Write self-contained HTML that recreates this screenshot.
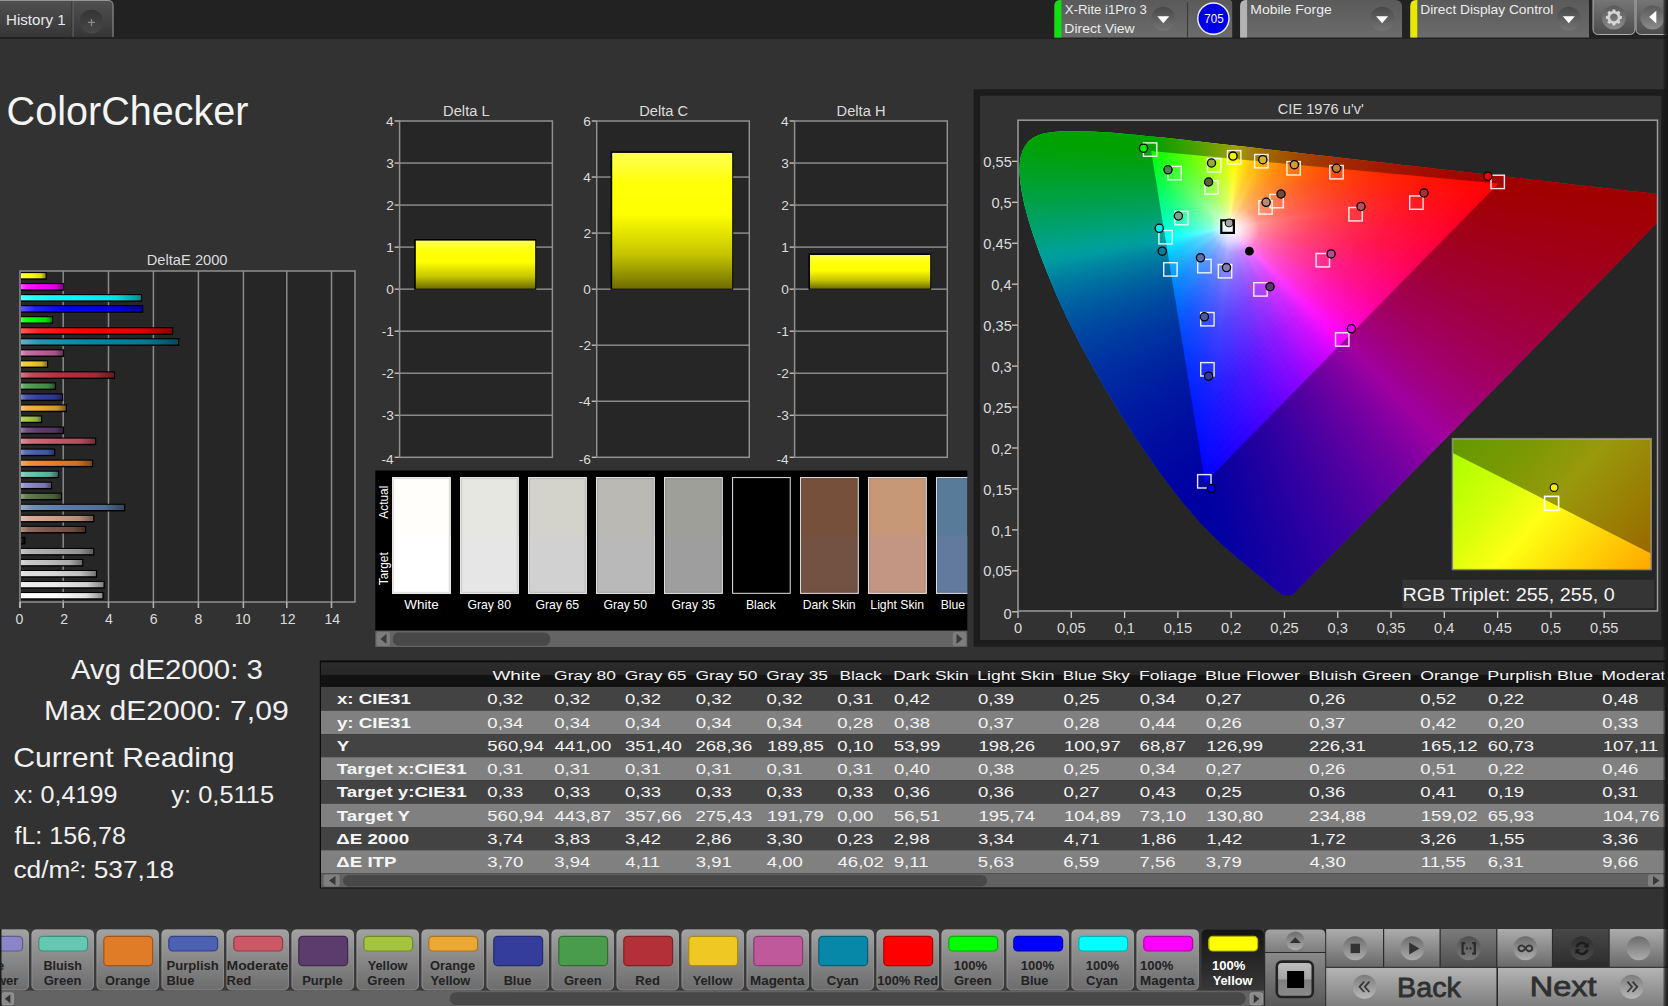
<!DOCTYPE html>
<html><head><meta charset="utf-8"><title>ColorChecker</title>
<style>
html,body{margin:0;padding:0;background:#323232;width:1668px;height:1006px;overflow:hidden}
svg{position:absolute;left:0;top:0}
text{font-family:"Liberation Sans",sans-serif;white-space:pre}
</style></head><body>
<svg width="1668" height="1006" viewBox="0 0 1668 1006">
<defs>
<linearGradient id="gTab" x1="0" y1="0" x2="0" y2="1"><stop offset="0" stop-color="#505050"/><stop offset="1" stop-color="#363636"/></linearGradient>
<linearGradient id="gPanel" x1="0" y1="0" x2="0" y2="1"><stop offset="0" stop-color="#5a5a5a"/><stop offset="1" stop-color="#6c6c6c"/></linearGradient>
<linearGradient id="gCirc" x1="0" y1="0" x2="0" y2="1"><stop offset="0" stop-color="#484848"/><stop offset="1" stop-color="#747474"/></linearGradient>
<linearGradient id="gBtn" x1="0" y1="0" x2="0" y2="1"><stop offset="0" stop-color="#787878"/><stop offset="1" stop-color="#4c4c4c"/></linearGradient>
<linearGradient id="gBtnC" x1="0" y1="0" x2="0" y2="1"><stop offset="0" stop-color="#585858"/><stop offset="1" stop-color="#8c8c8c"/></linearGradient>
<linearGradient id="gPlus" x1="0" y1="0" x2="0" y2="1"><stop offset="0" stop-color="#343434"/><stop offset="1" stop-color="#484848"/></linearGradient>
<linearGradient id="gEdge" x1="0" y1="0" x2="1" y2="0"><stop offset="0" stop-color="#323232"/><stop offset="1" stop-color="#101010"/></linearGradient>
<linearGradient id="gb0" x1="0" y1="0" x2="1" y2="0"><stop offset="0" stop-color="#ffff59"/><stop offset="0.12" stop-color="#ffff1f"/><stop offset="0.4" stop-color="#ffff00"/><stop offset="0.8" stop-color="#e0e000"/><stop offset="1" stop-color="#8c8c00"/></linearGradient>
<linearGradient id="gb1" x1="0" y1="0" x2="1" y2="0"><stop offset="0" stop-color="#ff59ff"/><stop offset="0.12" stop-color="#ff1fff"/><stop offset="0.4" stop-color="#ff00ff"/><stop offset="0.8" stop-color="#e000e0"/><stop offset="1" stop-color="#8c008c"/></linearGradient>
<linearGradient id="gb2" x1="0" y1="0" x2="1" y2="0"><stop offset="0" stop-color="#59ffff"/><stop offset="0.12" stop-color="#1fffff"/><stop offset="0.4" stop-color="#00ffff"/><stop offset="0.8" stop-color="#00e0e0"/><stop offset="1" stop-color="#008c8c"/></linearGradient>
<linearGradient id="gb3" x1="0" y1="0" x2="1" y2="0"><stop offset="0" stop-color="#5959ff"/><stop offset="0.12" stop-color="#1f1fff"/><stop offset="0.4" stop-color="#0000ff"/><stop offset="0.8" stop-color="#0000e0"/><stop offset="1" stop-color="#00008c"/></linearGradient>
<linearGradient id="gb4" x1="0" y1="0" x2="1" y2="0"><stop offset="0" stop-color="#59ff59"/><stop offset="0.12" stop-color="#1fff1f"/><stop offset="0.4" stop-color="#00ff00"/><stop offset="0.8" stop-color="#00e000"/><stop offset="1" stop-color="#008c00"/></linearGradient>
<linearGradient id="gb5" x1="0" y1="0" x2="1" y2="0"><stop offset="0" stop-color="#ff5959"/><stop offset="0.12" stop-color="#ff1f1f"/><stop offset="0.4" stop-color="#ff0000"/><stop offset="0.8" stop-color="#e00000"/><stop offset="1" stop-color="#8c0000"/></linearGradient>
<linearGradient id="gb6" x1="0" y1="0" x2="1" y2="0"><stop offset="0" stop-color="#60b1c6"/><stop offset="0.12" stop-color="#2795b2"/><stop offset="0.4" stop-color="#0a87a8"/><stop offset="0.8" stop-color="#097794"/><stop offset="1" stop-color="#064a5c"/></linearGradient>
<linearGradient id="gb7" x1="0" y1="0" x2="1" y2="0"><stop offset="0" stop-color="#d698bf"/><stop offset="0.12" stop-color="#c873a8"/><stop offset="0.4" stop-color="#c0609c"/><stop offset="0.8" stop-color="#a95489"/><stop offset="1" stop-color="#6a3556"/></linearGradient>
<linearGradient id="gb8" x1="0" y1="0" x2="1" y2="0"><stop offset="0" stop-color="#f4db76"/><stop offset="0.12" stop-color="#f0cf45"/><stop offset="0.4" stop-color="#eec82c"/><stop offset="0.8" stop-color="#d1b027"/><stop offset="1" stop-color="#836e18"/></linearGradient>
<linearGradient id="gb9" x1="0" y1="0" x2="1" y2="0"><stop offset="0" stop-color="#d17883"/><stop offset="0.12" stop-color="#c14957"/><stop offset="0.4" stop-color="#b83040"/><stop offset="0.8" stop-color="#a22a38"/><stop offset="1" stop-color="#651a23"/></linearGradient>
<linearGradient id="gb10" x1="0" y1="0" x2="1" y2="0"><stop offset="0" stop-color="#89bd8b"/><stop offset="0.12" stop-color="#60a661"/><stop offset="0.4" stop-color="#4a9a4c"/><stop offset="0.8" stop-color="#418843"/><stop offset="1" stop-color="#29552a"/></linearGradient>
<linearGradient id="gb11" x1="0" y1="0" x2="1" y2="0"><stop offset="0" stop-color="#7b83c4"/><stop offset="0.12" stop-color="#4c57af"/><stop offset="0.4" stop-color="#3440a4"/><stop offset="0.8" stop-color="#2e3890"/><stop offset="1" stop-color="#1d235a"/></linearGradient>
<linearGradient id="gb12" x1="0" y1="0" x2="1" y2="0"><stop offset="0" stop-color="#f5c678"/><stop offset="0.12" stop-color="#f2b249"/><stop offset="0.4" stop-color="#f0a830"/><stop offset="0.8" stop-color="#d3942a"/><stop offset="1" stop-color="#845c1a"/></linearGradient>
<linearGradient id="gb13" x1="0" y1="0" x2="1" y2="0"><stop offset="0" stop-color="#c4d985"/><stop offset="0.12" stop-color="#afcb5a"/><stop offset="0.4" stop-color="#a4c444"/><stop offset="0.8" stop-color="#90ac3c"/><stop offset="1" stop-color="#5a6c25"/></linearGradient>
<linearGradient id="gb14" x1="0" y1="0" x2="1" y2="0"><stop offset="0" stop-color="#9880a2"/><stop offset="0.12" stop-color="#735381"/><stop offset="0.4" stop-color="#603c70"/><stop offset="0.8" stop-color="#543563"/><stop offset="1" stop-color="#35213e"/></linearGradient>
<linearGradient id="gb15" x1="0" y1="0" x2="1" y2="0"><stop offset="0" stop-color="#de929e"/><stop offset="0.12" stop-color="#d26c7c"/><stop offset="0.4" stop-color="#cc586a"/><stop offset="0.8" stop-color="#b44d5d"/><stop offset="1" stop-color="#70303a"/></linearGradient>
<linearGradient id="gb16" x1="0" y1="0" x2="1" y2="0"><stop offset="0" stop-color="#8898cc"/><stop offset="0.12" stop-color="#5e73b9"/><stop offset="0.4" stop-color="#4860b0"/><stop offset="0.8" stop-color="#3f549b"/><stop offset="1" stop-color="#283561"/></linearGradient>
<linearGradient id="gb17" x1="0" y1="0" x2="1" y2="0"><stop offset="0" stop-color="#f0ac76"/><stop offset="0.12" stop-color="#eb8f45"/><stop offset="0.4" stop-color="#e8802c"/><stop offset="0.8" stop-color="#cc7127"/><stop offset="1" stop-color="#804618"/></linearGradient>
<linearGradient id="gb18" x1="0" y1="0" x2="1" y2="0"><stop offset="0" stop-color="#99d6c8"/><stop offset="0.12" stop-color="#75c8b4"/><stop offset="0.4" stop-color="#62c0aa"/><stop offset="0.8" stop-color="#56a996"/><stop offset="1" stop-color="#366a5e"/></linearGradient>
<linearGradient id="gb19" x1="0" y1="0" x2="1" y2="0"><stop offset="0" stop-color="#b3afd9"/><stop offset="0.12" stop-color="#9893cb"/><stop offset="0.4" stop-color="#8a84c4"/><stop offset="0.8" stop-color="#7974ac"/><stop offset="1" stop-color="#4c496c"/></linearGradient>
<linearGradient id="gb20" x1="0" y1="0" x2="1" y2="0"><stop offset="0" stop-color="#92a283"/><stop offset="0.12" stop-color="#6c8157"/><stop offset="0.4" stop-color="#587040"/><stop offset="0.8" stop-color="#4d6338"/><stop offset="1" stop-color="#303e23"/></linearGradient>
<linearGradient id="gb21" x1="0" y1="0" x2="1" y2="0"><stop offset="0" stop-color="#95aac6"/><stop offset="0.12" stop-color="#708cb2"/><stop offset="0.4" stop-color="#5c7ca8"/><stop offset="0.8" stop-color="#516d94"/><stop offset="1" stop-color="#33445c"/></linearGradient>
<linearGradient id="gb22" x1="0" y1="0" x2="1" y2="0"><stop offset="0" stop-color="#e0c1b2"/><stop offset="0.12" stop-color="#d6ab96"/><stop offset="0.4" stop-color="#d0a088"/><stop offset="0.8" stop-color="#b78d78"/><stop offset="1" stop-color="#72584b"/></linearGradient>
<linearGradient id="gb23" x1="0" y1="0" x2="1" y2="0"><stop offset="0" stop-color="#ac9288"/><stop offset="0.12" stop-color="#8f6c5e"/><stop offset="0.4" stop-color="#805848"/><stop offset="0.8" stop-color="#714d3f"/><stop offset="1" stop-color="#463028"/></linearGradient>
<linearGradient id="gb24" x1="0" y1="0" x2="1" y2="0"><stop offset="0" stop-color="#646464"/><stop offset="0.12" stop-color="#2d2d2d"/><stop offset="0.4" stop-color="#101010"/><stop offset="0.8" stop-color="#0e0e0e"/><stop offset="1" stop-color="#090909"/></linearGradient>
<linearGradient id="gb25" x1="0" y1="0" x2="1" y2="0"><stop offset="0" stop-color="#c6c6c6"/><stop offset="0.12" stop-color="#b2b2b2"/><stop offset="0.4" stop-color="#a8a8a8"/><stop offset="0.8" stop-color="#949494"/><stop offset="1" stop-color="#5c5c5c"/></linearGradient>
<linearGradient id="gb26" x1="0" y1="0" x2="1" y2="0"><stop offset="0" stop-color="#d6d6d6"/><stop offset="0.12" stop-color="#c8c8c8"/><stop offset="0.4" stop-color="#c0c0c0"/><stop offset="0.8" stop-color="#a9a9a9"/><stop offset="1" stop-color="#6a6a6a"/></linearGradient>
<linearGradient id="gb27" x1="0" y1="0" x2="1" y2="0"><stop offset="0" stop-color="#e6e6e6"/><stop offset="0.12" stop-color="#dddddd"/><stop offset="0.4" stop-color="#d8d8d8"/><stop offset="0.8" stop-color="#bebebe"/><stop offset="1" stop-color="#777777"/></linearGradient>
<linearGradient id="gb28" x1="0" y1="0" x2="1" y2="0"><stop offset="0" stop-color="#f3f3f3"/><stop offset="0.12" stop-color="#eeeeee"/><stop offset="0.4" stop-color="#ececec"/><stop offset="0.8" stop-color="#d0d0d0"/><stop offset="1" stop-color="#828282"/></linearGradient>
<linearGradient id="gb29" x1="0" y1="0" x2="1" y2="0"><stop offset="0" stop-color="#ffffff"/><stop offset="0.12" stop-color="#ffffff"/><stop offset="0.4" stop-color="#ffffff"/><stop offset="0.8" stop-color="#e0e0e0"/><stop offset="1" stop-color="#8c8c8c"/></linearGradient>
<linearGradient id="gYel" x1="0" y1="0" x2="0" y2="1"><stop offset="0" stop-color="#ffff58"/><stop offset="0.22" stop-color="#ffff08"/><stop offset="0.45" stop-color="#ffff00"/><stop offset="0.75" stop-color="#c4c400"/><stop offset="1" stop-color="#6e6c00"/></linearGradient>
<linearGradient id="gHdr" x1="0" y1="0" x2="0" y2="1"><stop offset="0" stop-color="#2c2c2c"/><stop offset="0.5" stop-color="#262626"/><stop offset="0.52" stop-color="#141414"/><stop offset="1" stop-color="#101010"/></linearGradient>
<linearGradient id="gB" x1="0" y1="0" x2="0" y2="1"><stop offset="0" stop-color="#a2a2a2"/><stop offset="1" stop-color="#6c6c6c"/></linearGradient>
<linearGradient id="gBsel" x1="0" y1="0" x2="0" y2="1"><stop offset="0" stop-color="#151515"/><stop offset="1" stop-color="#383838"/></linearGradient>
<linearGradient id="gC1" x1="0" y1="0" x2="0" y2="1"><stop offset="0" stop-color="#acacac"/><stop offset="1" stop-color="#6a6a6a"/></linearGradient>
<linearGradient id="gC1c" x1="0" y1="0" x2="0" y2="1"><stop offset="0" stop-color="#6c6c6c"/><stop offset="1" stop-color="#acacac"/></linearGradient>
<linearGradient id="gC2" x1="0" y1="0" x2="0" y2="1"><stop offset="0" stop-color="#7c7c7c"/><stop offset="1" stop-color="#505050"/></linearGradient>
<linearGradient id="gC2c" x1="0" y1="0" x2="0" y2="1"><stop offset="0" stop-color="#4e4e4e"/><stop offset="1" stop-color="#7c7c7c"/></linearGradient>
<linearGradient id="gC3" x1="0" y1="0" x2="0" y2="1"><stop offset="0" stop-color="#484848"/><stop offset="1" stop-color="#2c2c2c"/></linearGradient>
<linearGradient id="gC3c" x1="0" y1="0" x2="0" y2="1"><stop offset="0" stop-color="#2e2e2e"/><stop offset="1" stop-color="#4a4a4a"/></linearGradient>
<linearGradient id="gBk" x1="0" y1="0" x2="0" y2="1"><stop offset="0" stop-color="#b4b4b4"/><stop offset="1" stop-color="#7e7e7e"/></linearGradient>
<linearGradient id="gBkc" x1="0" y1="0" x2="0" y2="1"><stop offset="0" stop-color="#7c7c7c"/><stop offset="1" stop-color="#b8b8b8"/></linearGradient>
<linearGradient id="gS1" x1="0" y1="0" x2="0" y2="1"><stop offset="0" stop-color="#a4a4a4"/><stop offset="1" stop-color="#7c7c7c"/></linearGradient>
<linearGradient id="gS2" x1="0" y1="0" x2="0" y2="1"><stop offset="0" stop-color="#8a8a8a"/><stop offset="1" stop-color="#585858"/></linearGradient>
<linearGradient id="gSq" x1="0" y1="0" x2="0" y2="1"><stop offset="0" stop-color="#c0c0c0"/><stop offset="0.5" stop-color="#a4a4a4"/><stop offset="0.51" stop-color="#7e7e7e"/><stop offset="1" stop-color="#8a8a8a"/></linearGradient>
</defs>
<rect x="0.00" y="0.00" width="1668.00" height="39.00" fill="#222222"/>
<path d="M0 0 H108 Q113.5 0 113.5 5.5 V37 H0Z" fill="url(#gTab)"/>
<path d="M0 0.5 H108 Q113 0.5 113 5.5 V37" fill="none" stroke="#949494" stroke-width="1"/>
<path d="M72.9 1 V37" stroke="#767676" stroke-width="1"/>
<path d="M71.9 1 V37" stroke="#343434" stroke-width="1"/>
<circle cx="91.5" cy="21.6" r="11.8" fill="url(#gPlus)"/>
<path d="M88 22.4 H95 M91.5 18.9 V25.9" stroke="#8c8c8c" stroke-width="1.2"/>
<text x="5.99" y="25.10" font-size="14.53" textLength="59.59" lengthAdjust="spacingAndGlyphs" fill="#e8e8e8">History 1</text>
<path d="M1054.4 37.5 V6 Q1054.4 0 1060.4 0 H1229.2 Q1232.2 0 1232.2 3 V37.5Z" fill="url(#gPanel)"/>
<path d="M1054.4 37.5 V6 Q1054.4 0 1060.4 0 H1061.4 V37.5Z" fill="#10e010"/>
<path d="M1187.5 2 V37.5" stroke="#3c3c3c" stroke-width="1.2"/>
<circle cx="1163.3" cy="18.7" r="12" fill="url(#gCirc)"/>
<path d="M1157.3 16.2 h12 l-6 7z" fill="#fff"/>
<circle cx="1213.4" cy="18.6" r="15.6" fill="#0000e6" stroke="#f0f0ff" stroke-width="1.4"/>
<text x="1204.32" y="22.90" font-size="11.92" textLength="19.28" lengthAdjust="spacingAndGlyphs" fill="#fff">705</text>
<text x="1064.84" y="13.90" font-size="12.94" textLength="81.99" lengthAdjust="spacingAndGlyphs" fill="#ececec">X-Rite i1Pro 3</text>
<text x="1064.39" y="32.90" font-size="12.94" textLength="70.20" lengthAdjust="spacingAndGlyphs" fill="#ececec">Direct View</text>
<path d="M1240.1 37.5 V6 Q1240.1 0 1246.1 0 H1395 Q1402 0 1402 7 V37.5Z" fill="url(#gPanel)"/>
<path d="M1240.1 37.5 V6 Q1240.1 0 1246.1 0 H1247.1 V37.5Z" fill="#b4b4b4"/>
<circle cx="1382.1" cy="18.7" r="12" fill="url(#gCirc)"/>
<path d="M1376.1 16.2 h12 l-6 7z" fill="#fff"/>
<text x="1250.28" y="13.90" font-size="12.94" textLength="81.39" lengthAdjust="spacingAndGlyphs" fill="#ececec">Mobile Forge</text>
<path d="M1410.3 37.5 V6 Q1410.3 0 1416.3 0 H1588 Q1589 0 1589 1 V37.5Z" fill="url(#gPanel)"/>
<path d="M1410.3 37.5 V6 Q1410.3 0 1416.3 0 H1417.3 V37.5Z" fill="#e8e800"/>
<circle cx="1568.8" cy="18.7" r="12" fill="url(#gCirc)"/>
<path d="M1562.8 16.2 h12 l-6 7z" fill="#fff"/>
<text x="1420.30" y="13.90" font-size="12.94" textLength="132.99" lengthAdjust="spacingAndGlyphs" fill="#ececec">Direct Display Control</text>
<path d="M1593 -2 V29 Q1593 34.5 1598.5 34.5 H1629.5 Q1635 34.5 1635 29 V-2Z" fill="url(#gBtn)" stroke="#b0b0b0" stroke-width="1"/>
<circle cx="1613.9" cy="17.4" r="12" fill="url(#gBtnC)"/>
<path d="M1621.90,16.11 L1621.90,18.69 L1620.16,19.13 L1619.56,20.60 L1620.47,22.14 L1618.64,23.97 L1617.10,23.06 L1615.64,23.66 L1615.19,25.40 L1612.61,25.40 L1612.17,23.66 L1610.70,23.06 L1609.16,23.97 L1607.33,22.14 L1608.24,20.60 L1607.64,19.14 L1605.90,18.69 L1605.90,16.11 L1607.64,15.67 L1608.24,14.20 L1607.33,12.66 L1609.16,10.83 L1610.70,11.74 L1612.16,11.14 L1612.61,9.40 L1615.19,9.40 L1615.63,11.14 L1617.10,11.74 L1618.64,10.83 L1620.47,12.66 L1619.56,14.20 L1620.16,15.66 Z M1613.90 13.50 a3.9 3.9 0 1 0 0.01 0Z" fill="#d4d4d4" fill-rule="evenodd"/>
<path d="M1636 -2 V29 Q1636 34.5 1641.5 34.5 H1672 V-2Z" fill="url(#gBtn)" stroke="#b0b0b0" stroke-width="1"/>
<circle cx="1652.5" cy="17.4" r="12" fill="url(#gBtnC)"/>
<path d="M1656.3 10.7 V23.5 L1649.2 17.1Z" fill="#fff"/>
<text x="6.62" y="125.20" font-size="41.57" textLength="241.81" lengthAdjust="spacingAndGlyphs" fill="#f4f4f4">ColorChecker</text>
<text x="71.00" y="678.80" font-size="27.03" textLength="191.75" lengthAdjust="spacingAndGlyphs" fill="#f0f0f0">Avg dE2000: 3</text>
<text x="44.09" y="719.60" font-size="27.03" textLength="244.62" lengthAdjust="spacingAndGlyphs" fill="#f0f0f0">Max dE2000: 7,09</text>
<text x="13.19" y="767.40" font-size="27.33" textLength="221.30" lengthAdjust="spacingAndGlyphs" fill="#f0f0f0">Current Reading</text>
<text x="13.95" y="802.80" font-size="24.13" textLength="103.47" lengthAdjust="spacingAndGlyphs" fill="#f0f0f0">x: 0,4199</text>
<text x="171.30" y="802.80" font-size="24.13" textLength="102.82" lengthAdjust="spacingAndGlyphs" fill="#f0f0f0">y: 0,5115</text>
<text x="14.45" y="843.60" font-size="24.42" textLength="111.43" lengthAdjust="spacingAndGlyphs" fill="#f0f0f0">fL: 156,78</text>
<text x="13.45" y="877.70" font-size="24.42" textLength="160.69" lengthAdjust="spacingAndGlyphs" fill="#f0f0f0">cd/m²: 537,18</text>
<rect x="20.00" y="271.00" width="335.00" height="331.00" fill="#262626"/>
<rect x="62.45" y="271.00" width="1.50" height="331.00" fill="#8a8a8a"/>
<rect x="107.75" y="271.00" width="1.50" height="331.00" fill="#8a8a8a"/>
<rect x="152.65" y="271.00" width="1.50" height="331.00" fill="#8a8a8a"/>
<rect x="197.65" y="271.00" width="1.50" height="331.00" fill="#8a8a8a"/>
<rect x="242.65" y="271.00" width="1.50" height="331.00" fill="#8a8a8a"/>
<rect x="286.05" y="271.00" width="1.50" height="331.00" fill="#8a8a8a"/>
<rect x="330.75" y="271.00" width="1.50" height="331.00" fill="#8a8a8a"/>
<rect x="20.00" y="272.02" width="26.80" height="7.70" fill="#000"/>
<rect x="21.00" y="273.12" width="24.60" height="5.20" fill="url(#gb0)"/>
<rect x="20.00" y="283.05" width="44.10" height="7.70" fill="#000"/>
<rect x="21.00" y="284.15" width="41.90" height="5.20" fill="url(#gb1)"/>
<rect x="20.00" y="294.08" width="122.10" height="7.70" fill="#000"/>
<rect x="21.00" y="295.18" width="119.90" height="5.20" fill="url(#gb2)"/>
<rect x="20.00" y="305.12" width="123.30" height="7.70" fill="#000"/>
<rect x="21.00" y="306.22" width="121.10" height="5.20" fill="url(#gb3)"/>
<rect x="20.00" y="316.15" width="33.10" height="7.70" fill="#000"/>
<rect x="21.00" y="317.25" width="30.90" height="5.20" fill="url(#gb4)"/>
<rect x="20.00" y="327.18" width="153.30" height="7.70" fill="#000"/>
<rect x="21.00" y="328.28" width="151.10" height="5.20" fill="url(#gb5)"/>
<rect x="20.00" y="338.22" width="159.30" height="7.70" fill="#000"/>
<rect x="21.00" y="339.32" width="157.10" height="5.20" fill="url(#gb6)"/>
<rect x="20.00" y="349.25" width="44.10" height="7.70" fill="#000"/>
<rect x="21.00" y="350.35" width="41.90" height="5.20" fill="url(#gb7)"/>
<rect x="20.00" y="360.28" width="28.20" height="7.70" fill="#000"/>
<rect x="21.00" y="361.38" width="26.00" height="5.20" fill="url(#gb8)"/>
<rect x="20.00" y="371.32" width="95.10" height="7.70" fill="#000"/>
<rect x="21.00" y="372.42" width="92.90" height="5.20" fill="url(#gb9)"/>
<rect x="20.00" y="382.35" width="36.10" height="7.70" fill="#000"/>
<rect x="21.00" y="383.45" width="33.90" height="5.20" fill="url(#gb10)"/>
<rect x="20.00" y="393.38" width="43.20" height="7.70" fill="#000"/>
<rect x="21.00" y="394.48" width="41.00" height="5.20" fill="url(#gb11)"/>
<rect x="20.00" y="404.42" width="46.90" height="7.70" fill="#000"/>
<rect x="21.00" y="405.52" width="44.70" height="5.20" fill="url(#gb12)"/>
<rect x="20.00" y="415.45" width="22.20" height="7.70" fill="#000"/>
<rect x="21.00" y="416.55" width="20.00" height="5.20" fill="url(#gb13)"/>
<rect x="20.00" y="426.48" width="44.10" height="7.70" fill="#000"/>
<rect x="21.00" y="427.58" width="41.90" height="5.20" fill="url(#gb14)"/>
<rect x="20.00" y="437.52" width="76.20" height="7.70" fill="#000"/>
<rect x="21.00" y="438.62" width="74.00" height="5.20" fill="url(#gb15)"/>
<rect x="20.00" y="448.55" width="35.30" height="7.70" fill="#000"/>
<rect x="21.00" y="449.65" width="33.10" height="5.20" fill="url(#gb16)"/>
<rect x="20.00" y="459.58" width="73.20" height="7.70" fill="#000"/>
<rect x="21.00" y="460.68" width="71.00" height="5.20" fill="url(#gb17)"/>
<rect x="20.00" y="470.62" width="39.10" height="7.70" fill="#000"/>
<rect x="21.00" y="471.72" width="36.90" height="5.20" fill="url(#gb18)"/>
<rect x="20.00" y="481.65" width="32.20" height="7.70" fill="#000"/>
<rect x="21.00" y="482.75" width="30.00" height="5.20" fill="url(#gb19)"/>
<rect x="20.00" y="492.68" width="42.10" height="7.70" fill="#000"/>
<rect x="21.00" y="493.78" width="39.90" height="5.20" fill="url(#gb20)"/>
<rect x="20.00" y="503.72" width="105.30" height="7.70" fill="#000"/>
<rect x="21.00" y="504.82" width="103.10" height="5.20" fill="url(#gb21)"/>
<rect x="20.00" y="514.75" width="74.40" height="7.70" fill="#000"/>
<rect x="21.00" y="515.85" width="72.20" height="5.20" fill="url(#gb22)"/>
<rect x="20.00" y="525.78" width="66.20" height="7.70" fill="#000"/>
<rect x="21.00" y="526.88" width="64.00" height="5.20" fill="url(#gb23)"/>
<rect x="20.00" y="536.82" width="5.40" height="7.70" fill="#000"/>
<rect x="21.00" y="537.92" width="3.20" height="5.20" fill="url(#gb24)"/>
<rect x="20.00" y="547.85" width="74.40" height="7.70" fill="#000"/>
<rect x="21.00" y="548.95" width="72.20" height="5.20" fill="url(#gb25)"/>
<rect x="20.00" y="558.88" width="63.30" height="7.70" fill="#000"/>
<rect x="21.00" y="559.98" width="61.10" height="5.20" fill="url(#gb26)"/>
<rect x="20.00" y="569.92" width="77.10" height="7.70" fill="#000"/>
<rect x="21.00" y="571.02" width="74.90" height="5.20" fill="url(#gb27)"/>
<rect x="20.00" y="580.95" width="84.70" height="7.70" fill="#000"/>
<rect x="21.00" y="582.05" width="82.50" height="5.20" fill="url(#gb28)"/>
<rect x="20.00" y="591.98" width="83.60" height="7.70" fill="#000"/>
<rect x="21.00" y="593.08" width="81.40" height="5.20" fill="url(#gb29)"/>
<rect x="20" y="271" width="335" height="331" fill="none" stroke="#909090" stroke-width="1.5"/>
<rect x="19.20" y="602.00" width="1.60" height="6.00" fill="#d0d0d0"/>
<rect x="62.40" y="602.00" width="1.60" height="6.00" fill="#b0b0b0"/>
<rect x="107.70" y="602.00" width="1.60" height="6.00" fill="#b0b0b0"/>
<rect x="152.60" y="602.00" width="1.60" height="6.00" fill="#b0b0b0"/>
<rect x="197.60" y="602.00" width="1.60" height="6.00" fill="#b0b0b0"/>
<rect x="242.60" y="602.00" width="1.60" height="6.00" fill="#b0b0b0"/>
<rect x="286.00" y="602.00" width="1.60" height="6.00" fill="#b0b0b0"/>
<rect x="330.70" y="602.00" width="1.60" height="6.00" fill="#b0b0b0"/>
<text x="15.49" y="624.20" font-size="14.53" textLength="7.84" lengthAdjust="spacingAndGlyphs" fill="#dcdcdc">0</text>
<text x="60.20" y="624.20" font-size="14.53" textLength="7.84" lengthAdjust="spacingAndGlyphs" fill="#dcdcdc">2</text>
<text x="105.02" y="624.20" font-size="14.53" textLength="7.84" lengthAdjust="spacingAndGlyphs" fill="#dcdcdc">4</text>
<text x="149.67" y="624.20" font-size="14.53" textLength="7.84" lengthAdjust="spacingAndGlyphs" fill="#dcdcdc">6</text>
<text x="194.49" y="624.20" font-size="14.53" textLength="7.84" lengthAdjust="spacingAndGlyphs" fill="#dcdcdc">8</text>
<text x="235.04" y="624.20" font-size="14.53" textLength="15.68" lengthAdjust="spacingAndGlyphs" fill="#dcdcdc">10</text>
<text x="279.86" y="624.20" font-size="14.53" textLength="15.68" lengthAdjust="spacingAndGlyphs" fill="#dcdcdc">12</text>
<text x="324.47" y="624.20" font-size="14.53" textLength="15.68" lengthAdjust="spacingAndGlyphs" fill="#dcdcdc">14</text>
<text x="146.77" y="265.20" font-size="14.83" textLength="80.78" lengthAdjust="spacingAndGlyphs" fill="#dcdcdc">DeltaE 2000</text>
<rect x="399.60" y="121.00" width="152.80" height="336.30" fill="#262626"/>
<rect x="394.60" y="120.35" width="5.00" height="1.30" fill="#c8c8c8"/>
<text x="386.06" y="125.70" font-size="13.66" textLength="7.60" lengthAdjust="spacingAndGlyphs" fill="#dcdcdc">4</text>
<rect x="399.60" y="162.29" width="152.80" height="1.50" fill="#8a8a8a"/>
<rect x="394.60" y="162.39" width="5.00" height="1.30" fill="#c8c8c8"/>
<text x="386.26" y="167.74" font-size="13.66" textLength="7.60" lengthAdjust="spacingAndGlyphs" fill="#dcdcdc">3</text>
<rect x="399.60" y="204.32" width="152.80" height="1.50" fill="#8a8a8a"/>
<rect x="394.60" y="204.42" width="5.00" height="1.30" fill="#c8c8c8"/>
<text x="386.33" y="209.77" font-size="13.66" textLength="7.60" lengthAdjust="spacingAndGlyphs" fill="#dcdcdc">2</text>
<rect x="399.60" y="246.36" width="152.80" height="1.50" fill="#8a8a8a"/>
<rect x="394.60" y="246.46" width="5.00" height="1.30" fill="#c8c8c8"/>
<text x="386.33" y="251.81" font-size="13.66" textLength="7.60" lengthAdjust="spacingAndGlyphs" fill="#dcdcdc">1</text>
<rect x="399.60" y="288.40" width="152.80" height="1.50" fill="#8a8a8a"/>
<rect x="394.60" y="288.50" width="5.00" height="1.30" fill="#c8c8c8"/>
<text x="386.20" y="293.85" font-size="13.66" textLength="7.60" lengthAdjust="spacingAndGlyphs" fill="#dcdcdc">0</text>
<rect x="399.60" y="330.44" width="152.80" height="1.50" fill="#8a8a8a"/>
<rect x="394.60" y="330.54" width="5.00" height="1.30" fill="#c8c8c8"/>
<text x="381.75" y="335.89" font-size="13.66" textLength="12.15" lengthAdjust="spacingAndGlyphs" fill="#dcdcdc">-1</text>
<rect x="399.60" y="372.48" width="152.80" height="1.50" fill="#8a8a8a"/>
<rect x="394.60" y="372.58" width="5.00" height="1.30" fill="#c8c8c8"/>
<text x="381.75" y="377.93" font-size="13.66" textLength="12.15" lengthAdjust="spacingAndGlyphs" fill="#dcdcdc">-2</text>
<rect x="399.60" y="414.51" width="152.80" height="1.50" fill="#8a8a8a"/>
<rect x="394.60" y="414.61" width="5.00" height="1.30" fill="#c8c8c8"/>
<text x="381.69" y="419.96" font-size="13.66" textLength="12.15" lengthAdjust="spacingAndGlyphs" fill="#dcdcdc">-3</text>
<rect x="394.60" y="456.65" width="5.00" height="1.30" fill="#c8c8c8"/>
<text x="381.48" y="464.20" font-size="13.66" textLength="12.15" lengthAdjust="spacingAndGlyphs" fill="#dcdcdc">-4</text>
<rect x="399.6" y="121" width="152.8" height="336.3" fill="none" stroke="#909090" stroke-width="1.5"/>
<rect x="414.20" y="239.00" width="122.00" height="50.75" fill="#000"/>
<rect x="415.80" y="240.60" width="119.40" height="48.05" fill="url(#gYel)"/>
<text x="443.11" y="116.40" font-size="14.83" textLength="46.51" lengthAdjust="spacingAndGlyphs" fill="#dcdcdc">Delta L</text>
<rect x="596.70" y="121.00" width="152.60" height="336.30" fill="#262626"/>
<rect x="591.70" y="120.35" width="5.00" height="1.30" fill="#c8c8c8"/>
<text x="583.36" y="125.70" font-size="13.66" textLength="7.60" lengthAdjust="spacingAndGlyphs" fill="#dcdcdc">6</text>
<rect x="596.70" y="176.30" width="152.60" height="1.50" fill="#8a8a8a"/>
<rect x="591.70" y="176.40" width="5.00" height="1.30" fill="#c8c8c8"/>
<text x="583.16" y="181.75" font-size="13.66" textLength="7.60" lengthAdjust="spacingAndGlyphs" fill="#dcdcdc">4</text>
<rect x="596.70" y="232.35" width="152.60" height="1.50" fill="#8a8a8a"/>
<rect x="591.70" y="232.45" width="5.00" height="1.30" fill="#c8c8c8"/>
<text x="583.43" y="237.80" font-size="13.66" textLength="7.60" lengthAdjust="spacingAndGlyphs" fill="#dcdcdc">2</text>
<rect x="596.70" y="288.40" width="152.60" height="1.50" fill="#8a8a8a"/>
<rect x="591.70" y="288.50" width="5.00" height="1.30" fill="#c8c8c8"/>
<text x="583.30" y="293.85" font-size="13.66" textLength="7.60" lengthAdjust="spacingAndGlyphs" fill="#dcdcdc">0</text>
<rect x="596.70" y="344.45" width="152.60" height="1.50" fill="#8a8a8a"/>
<rect x="591.70" y="344.55" width="5.00" height="1.30" fill="#c8c8c8"/>
<text x="578.85" y="349.90" font-size="13.66" textLength="12.15" lengthAdjust="spacingAndGlyphs" fill="#dcdcdc">-2</text>
<rect x="596.70" y="400.50" width="152.60" height="1.50" fill="#8a8a8a"/>
<rect x="591.70" y="400.60" width="5.00" height="1.30" fill="#c8c8c8"/>
<text x="578.58" y="405.95" font-size="13.66" textLength="12.15" lengthAdjust="spacingAndGlyphs" fill="#dcdcdc">-4</text>
<rect x="591.70" y="456.65" width="5.00" height="1.30" fill="#c8c8c8"/>
<text x="578.79" y="464.20" font-size="13.66" textLength="12.15" lengthAdjust="spacingAndGlyphs" fill="#dcdcdc">-6</text>
<rect x="596.7" y="121" width="152.6" height="336.3" fill="none" stroke="#909090" stroke-width="1.5"/>
<rect x="610.60" y="151.30" width="122.60" height="138.45" fill="#000"/>
<rect x="612.20" y="152.90" width="120.00" height="135.75" fill="url(#gYel)"/>
<text x="639.23" y="116.40" font-size="14.83" textLength="48.94" lengthAdjust="spacingAndGlyphs" fill="#dcdcdc">Delta C</text>
<rect x="794.60" y="121.00" width="152.70" height="336.30" fill="#262626"/>
<rect x="789.60" y="120.35" width="5.00" height="1.30" fill="#c8c8c8"/>
<text x="781.06" y="125.70" font-size="13.66" textLength="7.60" lengthAdjust="spacingAndGlyphs" fill="#dcdcdc">4</text>
<rect x="794.60" y="162.29" width="152.70" height="1.50" fill="#8a8a8a"/>
<rect x="789.60" y="162.39" width="5.00" height="1.30" fill="#c8c8c8"/>
<text x="781.26" y="167.74" font-size="13.66" textLength="7.60" lengthAdjust="spacingAndGlyphs" fill="#dcdcdc">3</text>
<rect x="794.60" y="204.32" width="152.70" height="1.50" fill="#8a8a8a"/>
<rect x="789.60" y="204.42" width="5.00" height="1.30" fill="#c8c8c8"/>
<text x="781.33" y="209.77" font-size="13.66" textLength="7.60" lengthAdjust="spacingAndGlyphs" fill="#dcdcdc">2</text>
<rect x="794.60" y="246.36" width="152.70" height="1.50" fill="#8a8a8a"/>
<rect x="789.60" y="246.46" width="5.00" height="1.30" fill="#c8c8c8"/>
<text x="781.33" y="251.81" font-size="13.66" textLength="7.60" lengthAdjust="spacingAndGlyphs" fill="#dcdcdc">1</text>
<rect x="794.60" y="288.40" width="152.70" height="1.50" fill="#8a8a8a"/>
<rect x="789.60" y="288.50" width="5.00" height="1.30" fill="#c8c8c8"/>
<text x="781.20" y="293.85" font-size="13.66" textLength="7.60" lengthAdjust="spacingAndGlyphs" fill="#dcdcdc">0</text>
<rect x="794.60" y="330.44" width="152.70" height="1.50" fill="#8a8a8a"/>
<rect x="789.60" y="330.54" width="5.00" height="1.30" fill="#c8c8c8"/>
<text x="776.75" y="335.89" font-size="13.66" textLength="12.15" lengthAdjust="spacingAndGlyphs" fill="#dcdcdc">-1</text>
<rect x="794.60" y="372.48" width="152.70" height="1.50" fill="#8a8a8a"/>
<rect x="789.60" y="372.58" width="5.00" height="1.30" fill="#c8c8c8"/>
<text x="776.75" y="377.93" font-size="13.66" textLength="12.15" lengthAdjust="spacingAndGlyphs" fill="#dcdcdc">-2</text>
<rect x="794.60" y="414.51" width="152.70" height="1.50" fill="#8a8a8a"/>
<rect x="789.60" y="414.61" width="5.00" height="1.30" fill="#c8c8c8"/>
<text x="776.69" y="419.96" font-size="13.66" textLength="12.15" lengthAdjust="spacingAndGlyphs" fill="#dcdcdc">-3</text>
<rect x="789.60" y="456.65" width="5.00" height="1.30" fill="#c8c8c8"/>
<text x="776.48" y="464.20" font-size="13.66" textLength="12.15" lengthAdjust="spacingAndGlyphs" fill="#dcdcdc">-4</text>
<rect x="794.6" y="121" width="152.7" height="336.3" fill="none" stroke="#909090" stroke-width="1.5"/>
<rect x="808.40" y="253.40" width="122.80" height="36.35" fill="#000"/>
<rect x="810.00" y="255.00" width="120.20" height="33.65" fill="url(#gYel)"/>
<text x="836.56" y="116.40" font-size="14.83" textLength="48.94" lengthAdjust="spacingAndGlyphs" fill="#dcdcdc">Delta H</text>
<rect x="375.30" y="470.50" width="592.00" height="160.20" fill="#000"/>
<clipPath id="swclip"><rect x="375.3" y="470.5" width="592" height="160.2"/></clipPath>
<g clip-path="url(#swclip)">
<rect x="392.10" y="477.10" width="58.60" height="116.70" fill="#fffefa"/>
<rect x="392.10" y="535.50" width="58.60" height="58.30" fill="#ffffff"/>
<rect x="392.6" y="477.6" width="57.6" height="115.7" fill="none" stroke="#e8e8e8" stroke-width="1"/>
<rect x="393.6" y="478.6" width="55.6" height="113.7" fill="none" stroke="#000" stroke-opacity="0.13" stroke-width="1"/>
<text x="404.38" y="608.90" font-size="12.79" textLength="34.33" lengthAdjust="spacingAndGlyphs" fill="#fff">White</text>
<rect x="460.10" y="477.10" width="58.60" height="116.70" fill="#e7e7e1"/>
<rect x="460.10" y="535.50" width="58.60" height="58.30" fill="#e6e6e6"/>
<rect x="460.6" y="477.6" width="57.6" height="115.7" fill="none" stroke="#e8e8e8" stroke-width="1"/>
<rect x="461.6" y="478.6" width="55.6" height="113.7" fill="none" stroke="#000" stroke-opacity="0.13" stroke-width="1"/>
<text x="467.50" y="608.90" font-size="12.79" textLength="43.45" lengthAdjust="spacingAndGlyphs" fill="#fff">Gray 80</text>
<rect x="528.10" y="477.10" width="58.60" height="116.70" fill="#d3d2cb"/>
<rect x="528.10" y="535.50" width="58.60" height="58.30" fill="#d1d1d1"/>
<rect x="528.6" y="477.6" width="57.6" height="115.7" fill="none" stroke="#e8e8e8" stroke-width="1"/>
<rect x="529.6" y="478.6" width="55.6" height="113.7" fill="none" stroke="#000" stroke-opacity="0.13" stroke-width="1"/>
<text x="535.53" y="608.90" font-size="12.79" textLength="43.45" lengthAdjust="spacingAndGlyphs" fill="#fff">Gray 65</text>
<rect x="596.10" y="477.10" width="58.60" height="116.70" fill="#bab9b3"/>
<rect x="596.10" y="535.50" width="58.60" height="58.30" fill="#b9b9b9"/>
<rect x="596.6" y="477.6" width="57.6" height="115.7" fill="none" stroke="#e8e8e8" stroke-width="1"/>
<rect x="597.6" y="478.6" width="55.6" height="113.7" fill="none" stroke="#000" stroke-opacity="0.13" stroke-width="1"/>
<text x="603.50" y="608.90" font-size="12.79" textLength="43.45" lengthAdjust="spacingAndGlyphs" fill="#fff">Gray 50</text>
<rect x="664.10" y="477.10" width="58.60" height="116.70" fill="#9f9f99"/>
<rect x="664.10" y="535.50" width="58.60" height="58.30" fill="#9e9e9e"/>
<rect x="664.6" y="477.6" width="57.6" height="115.7" fill="none" stroke="#e8e8e8" stroke-width="1"/>
<rect x="665.6" y="478.6" width="55.6" height="113.7" fill="none" stroke="#000" stroke-opacity="0.13" stroke-width="1"/>
<text x="671.53" y="608.90" font-size="12.79" textLength="43.45" lengthAdjust="spacingAndGlyphs" fill="#fff">Gray 35</text>
<rect x="732.10" y="477.10" width="58.60" height="116.70" fill="#000000"/>
<rect x="732.10" y="535.50" width="58.60" height="58.30" fill="#000000"/>
<rect x="732.6" y="477.6" width="57.6" height="115.7" fill="none" stroke="#e8e8e8" stroke-width="1"/>
<rect x="733.6" y="478.6" width="55.6" height="113.7" fill="none" stroke="#000" stroke-opacity="0.13" stroke-width="1"/>
<text x="745.88" y="608.90" font-size="12.79" textLength="29.87" lengthAdjust="spacingAndGlyphs" fill="#fff">Black</text>
<rect x="800.10" y="477.10" width="58.60" height="116.70" fill="#76503a"/>
<rect x="800.10" y="535.50" width="58.60" height="58.30" fill="#735244"/>
<rect x="800.6" y="477.6" width="57.6" height="115.7" fill="none" stroke="#e8e8e8" stroke-width="1"/>
<rect x="801.6" y="478.6" width="55.6" height="113.7" fill="none" stroke="#000" stroke-opacity="0.13" stroke-width="1"/>
<text x="802.70" y="608.90" font-size="12.79" textLength="52.95" lengthAdjust="spacingAndGlyphs" fill="#fff">Dark Skin</text>
<rect x="868.10" y="477.10" width="58.60" height="116.70" fill="#c69878"/>
<rect x="868.10" y="535.50" width="58.60" height="58.30" fill="#c29682"/>
<rect x="868.6" y="477.6" width="57.6" height="115.7" fill="none" stroke="#e8e8e8" stroke-width="1"/>
<rect x="869.6" y="478.6" width="55.6" height="113.7" fill="none" stroke="#000" stroke-opacity="0.13" stroke-width="1"/>
<text x="870.37" y="608.90" font-size="12.79" textLength="53.65" lengthAdjust="spacingAndGlyphs" fill="#fff">Light Skin</text>
<rect x="936.10" y="477.10" width="58.60" height="116.70" fill="#587b99"/>
<rect x="936.10" y="535.50" width="58.60" height="58.30" fill="#627a9d"/>
<rect x="936.6" y="477.6" width="57.6" height="115.7" fill="none" stroke="#e8e8e8" stroke-width="1"/>
<rect x="937.6" y="478.6" width="55.6" height="113.7" fill="none" stroke="#000" stroke-opacity="0.13" stroke-width="1"/>
<text x="940.72" y="608.90" font-size="12.79" textLength="48.21" lengthAdjust="spacingAndGlyphs" fill="#fff">Blue Sky</text>
</g>
<g transform="translate(388.2,502.6) rotate(-90)"><text x="-16.12" y="0.00" font-size="12.79" textLength="33.06" lengthAdjust="spacingAndGlyphs" fill="#fff">Actual</text></g>
<g transform="translate(388.2,568.7) rotate(-90)"><text x="-16.59" y="0.00" font-size="12.79" textLength="33.06" lengthAdjust="spacingAndGlyphs" fill="#fff">Target</text></g>
<rect x="375.30" y="630.70" width="592.00" height="16.30" fill="#646464"/>
<rect x="376.5" y="632" width="13.5" height="14" rx="2" fill="#7c7c7c"/>
<path d="M386.5 633.8 V644 L380.5 638.9Z" fill="#3a3a3a"/>
<rect x="392.7" y="632.4" width="157.7" height="13.4" rx="6.5" fill="#484848"/>
<rect x="952.7" y="632" width="13.5" height="14" rx="2" fill="#7c7c7c"/>
<path d="M956.5 633.8 V644 L962.5 638.9Z" fill="#3a3a3a"/>
<rect x="973.60" y="89.30" width="700.00" height="557.30" fill="#1c1c1c"/>
<rect x="980.10" y="95.80" width="681.20" height="544.20" fill="#323232"/>
<text x="1277.83" y="114.20" font-size="14.83" textLength="85.95" lengthAdjust="spacingAndGlyphs" fill="#dcdcdc">CIE 1976 u&#x27;v&#x27;</text>
<rect x="1017.35" y="611.00" width="1.30" height="7.00" fill="#c8c8c8"/>
<text x="1013.93" y="633.40" font-size="13.95" textLength="8.15" lengthAdjust="spacingAndGlyphs" fill="#dcdcdc">0</text>
<rect x="1070.64" y="611.00" width="1.30" height="7.00" fill="#c8c8c8"/>
<text x="1057.08" y="633.40" font-size="13.95" textLength="28.52" lengthAdjust="spacingAndGlyphs" fill="#dcdcdc">0,05</text>
<rect x="1123.93" y="611.00" width="1.30" height="7.00" fill="#c8c8c8"/>
<text x="1114.47" y="633.40" font-size="13.95" textLength="20.37" lengthAdjust="spacingAndGlyphs" fill="#dcdcdc">0,1</text>
<rect x="1177.22" y="611.00" width="1.30" height="7.00" fill="#c8c8c8"/>
<text x="1163.66" y="633.40" font-size="13.95" textLength="28.52" lengthAdjust="spacingAndGlyphs" fill="#dcdcdc">0,15</text>
<rect x="1230.52" y="611.00" width="1.30" height="7.00" fill="#c8c8c8"/>
<text x="1221.06" y="633.40" font-size="13.95" textLength="20.37" lengthAdjust="spacingAndGlyphs" fill="#dcdcdc">0,2</text>
<rect x="1283.81" y="611.00" width="1.30" height="7.00" fill="#c8c8c8"/>
<text x="1270.25" y="633.40" font-size="13.95" textLength="28.52" lengthAdjust="spacingAndGlyphs" fill="#dcdcdc">0,25</text>
<rect x="1337.10" y="611.00" width="1.30" height="7.00" fill="#c8c8c8"/>
<text x="1327.60" y="633.40" font-size="13.95" textLength="20.37" lengthAdjust="spacingAndGlyphs" fill="#dcdcdc">0,3</text>
<rect x="1390.39" y="611.00" width="1.30" height="7.00" fill="#c8c8c8"/>
<text x="1376.83" y="633.40" font-size="13.95" textLength="28.52" lengthAdjust="spacingAndGlyphs" fill="#dcdcdc">0,35</text>
<rect x="1443.68" y="611.00" width="1.30" height="7.00" fill="#c8c8c8"/>
<text x="1434.08" y="633.40" font-size="13.95" textLength="20.37" lengthAdjust="spacingAndGlyphs" fill="#dcdcdc">0,4</text>
<rect x="1496.97" y="611.00" width="1.30" height="7.00" fill="#c8c8c8"/>
<text x="1483.41" y="633.40" font-size="13.95" textLength="28.52" lengthAdjust="spacingAndGlyphs" fill="#dcdcdc">0,45</text>
<rect x="1550.27" y="611.00" width="1.30" height="7.00" fill="#c8c8c8"/>
<text x="1540.77" y="633.40" font-size="13.95" textLength="20.37" lengthAdjust="spacingAndGlyphs" fill="#dcdcdc">0,5</text>
<rect x="1603.56" y="611.00" width="1.30" height="7.00" fill="#c8c8c8"/>
<text x="1590.00" y="633.40" font-size="13.95" textLength="28.52" lengthAdjust="spacingAndGlyphs" fill="#dcdcdc">0,55</text>
<rect x="1012.00" y="611.15" width="6.00" height="1.30" fill="#c8c8c8"/>
<text x="1003.58" y="619.20" font-size="13.95" textLength="8.15" lengthAdjust="spacingAndGlyphs" fill="#dcdcdc">0</text>
<rect x="1012.00" y="570.20" width="6.00" height="1.30" fill="#c8c8c8"/>
<text x="983.29" y="576.45" font-size="13.95" textLength="28.52" lengthAdjust="spacingAndGlyphs" fill="#dcdcdc">0,05</text>
<rect x="1012.00" y="529.25" width="6.00" height="1.30" fill="#c8c8c8"/>
<text x="991.49" y="535.50" font-size="13.95" textLength="20.37" lengthAdjust="spacingAndGlyphs" fill="#dcdcdc">0,1</text>
<rect x="1012.00" y="488.30" width="6.00" height="1.30" fill="#c8c8c8"/>
<text x="983.29" y="494.55" font-size="13.95" textLength="28.52" lengthAdjust="spacingAndGlyphs" fill="#dcdcdc">0,15</text>
<rect x="1012.00" y="447.35" width="6.00" height="1.30" fill="#c8c8c8"/>
<text x="991.49" y="453.60" font-size="13.95" textLength="20.37" lengthAdjust="spacingAndGlyphs" fill="#dcdcdc">0,2</text>
<rect x="1012.00" y="406.40" width="6.00" height="1.30" fill="#c8c8c8"/>
<text x="983.29" y="412.65" font-size="13.95" textLength="28.52" lengthAdjust="spacingAndGlyphs" fill="#dcdcdc">0,25</text>
<rect x="1012.00" y="365.45" width="6.00" height="1.30" fill="#c8c8c8"/>
<text x="991.42" y="371.70" font-size="13.95" textLength="20.37" lengthAdjust="spacingAndGlyphs" fill="#dcdcdc">0,3</text>
<rect x="1012.00" y="324.50" width="6.00" height="1.30" fill="#c8c8c8"/>
<text x="983.29" y="330.75" font-size="13.95" textLength="28.52" lengthAdjust="spacingAndGlyphs" fill="#dcdcdc">0,35</text>
<rect x="1012.00" y="283.55" width="6.00" height="1.30" fill="#c8c8c8"/>
<text x="991.20" y="289.80" font-size="13.95" textLength="20.37" lengthAdjust="spacingAndGlyphs" fill="#dcdcdc">0,4</text>
<rect x="1012.00" y="242.60" width="6.00" height="1.30" fill="#c8c8c8"/>
<text x="983.29" y="248.85" font-size="13.95" textLength="28.52" lengthAdjust="spacingAndGlyphs" fill="#dcdcdc">0,45</text>
<rect x="1012.00" y="201.65" width="6.00" height="1.30" fill="#c8c8c8"/>
<text x="991.42" y="207.90" font-size="13.95" textLength="20.37" lengthAdjust="spacingAndGlyphs" fill="#dcdcdc">0,5</text>
<rect x="1012.00" y="160.70" width="6.00" height="1.30" fill="#c8c8c8"/>
<text x="983.29" y="166.95" font-size="13.95" textLength="28.52" lengthAdjust="spacingAndGlyphs" fill="#dcdcdc">0,55</text>
<rect x="319.80" y="660.40" width="1347.50" height="228.00" fill="#0c0c0c"/>
<rect x="321.00" y="662.40" width="1344.50" height="24.60" fill="url(#gHdr)"/>
<rect x="321.00" y="686.90" width="1344.50" height="23.70" fill="#434343"/>
<rect x="321.00" y="710.60" width="1344.50" height="23.50" fill="#808080"/>
<rect x="321.00" y="734.10" width="1344.50" height="23.10" fill="#434343"/>
<rect x="321.00" y="757.20" width="1344.50" height="23.10" fill="#808080"/>
<rect x="321.00" y="780.30" width="1344.50" height="23.30" fill="#434343"/>
<rect x="321.00" y="803.60" width="1344.50" height="23.40" fill="#808080"/>
<rect x="321.00" y="827.00" width="1344.50" height="23.20" fill="#434343"/>
<rect x="321.00" y="850.20" width="1344.50" height="23.20" fill="#808080"/>
<clipPath id="tclip"><rect x="321" y="661.2" width="1344.5" height="230"/></clipPath>
<g clip-path="url(#tclip)">
<text x="492.41" y="680.30" font-size="12.94" textLength="48.37" lengthAdjust="spacingAndGlyphs" fill="#f4f4f4">White</text>
<text x="487.35" y="704.05" font-size="15.12" textLength="36.11" lengthAdjust="spacingAndGlyphs" fill="#f2f2f2">0,32</text>
<text x="487.35" y="727.65" font-size="15.12" textLength="36.11" lengthAdjust="spacingAndGlyphs" fill="#f2f2f2">0,34</text>
<text x="487.26" y="750.95" font-size="15.12" textLength="56.75" lengthAdjust="spacingAndGlyphs" fill="#f2f2f2">560,94</text>
<text x="487.35" y="774.05" font-size="15.12" textLength="36.11" lengthAdjust="spacingAndGlyphs" fill="#f2f2f2">0,31</text>
<text x="487.35" y="797.25" font-size="15.12" textLength="36.11" lengthAdjust="spacingAndGlyphs" fill="#f2f2f2">0,33</text>
<text x="487.26" y="820.60" font-size="15.12" textLength="56.75" lengthAdjust="spacingAndGlyphs" fill="#f2f2f2">560,94</text>
<text x="487.35" y="843.90" font-size="15.12" textLength="36.11" lengthAdjust="spacingAndGlyphs" fill="#f2f2f2">3,74</text>
<text x="487.35" y="867.10" font-size="15.12" textLength="36.11" lengthAdjust="spacingAndGlyphs" fill="#f2f2f2">3,70</text>
<text x="554.13" y="680.30" font-size="12.94" textLength="61.82" lengthAdjust="spacingAndGlyphs" fill="#f4f4f4">Gray 80</text>
<text x="554.25" y="704.05" font-size="15.12" textLength="36.11" lengthAdjust="spacingAndGlyphs" fill="#f2f2f2">0,32</text>
<text x="554.25" y="727.65" font-size="15.12" textLength="36.11" lengthAdjust="spacingAndGlyphs" fill="#f2f2f2">0,34</text>
<text x="554.53" y="750.95" font-size="15.12" textLength="56.75" lengthAdjust="spacingAndGlyphs" fill="#f2f2f2">441,00</text>
<text x="554.25" y="774.05" font-size="15.12" textLength="36.11" lengthAdjust="spacingAndGlyphs" fill="#f2f2f2">0,31</text>
<text x="554.25" y="797.25" font-size="15.12" textLength="36.11" lengthAdjust="spacingAndGlyphs" fill="#f2f2f2">0,33</text>
<text x="554.53" y="820.60" font-size="15.12" textLength="56.75" lengthAdjust="spacingAndGlyphs" fill="#f2f2f2">443,87</text>
<text x="554.25" y="843.90" font-size="15.12" textLength="36.11" lengthAdjust="spacingAndGlyphs" fill="#f2f2f2">3,83</text>
<text x="554.25" y="867.10" font-size="15.12" textLength="36.11" lengthAdjust="spacingAndGlyphs" fill="#f2f2f2">3,94</text>
<text x="624.83" y="680.30" font-size="12.94" textLength="61.60" lengthAdjust="spacingAndGlyphs" fill="#f4f4f4">Gray 65</text>
<text x="625.05" y="704.05" font-size="15.12" textLength="36.11" lengthAdjust="spacingAndGlyphs" fill="#f2f2f2">0,32</text>
<text x="625.05" y="727.65" font-size="15.12" textLength="36.11" lengthAdjust="spacingAndGlyphs" fill="#f2f2f2">0,34</text>
<text x="625.05" y="750.95" font-size="15.12" textLength="56.75" lengthAdjust="spacingAndGlyphs" fill="#f2f2f2">351,40</text>
<text x="625.05" y="774.05" font-size="15.12" textLength="36.11" lengthAdjust="spacingAndGlyphs" fill="#f2f2f2">0,31</text>
<text x="625.05" y="797.25" font-size="15.12" textLength="36.11" lengthAdjust="spacingAndGlyphs" fill="#f2f2f2">0,33</text>
<text x="625.05" y="820.60" font-size="15.12" textLength="56.75" lengthAdjust="spacingAndGlyphs" fill="#f2f2f2">357,66</text>
<text x="625.05" y="843.90" font-size="15.12" textLength="36.11" lengthAdjust="spacingAndGlyphs" fill="#f2f2f2">3,42</text>
<text x="625.33" y="867.10" font-size="15.12" textLength="34.73" lengthAdjust="spacingAndGlyphs" fill="#f2f2f2">4,11</text>
<text x="695.53" y="680.30" font-size="12.94" textLength="61.92" lengthAdjust="spacingAndGlyphs" fill="#f4f4f4">Gray 50</text>
<text x="695.75" y="704.05" font-size="15.12" textLength="36.11" lengthAdjust="spacingAndGlyphs" fill="#f2f2f2">0,32</text>
<text x="695.75" y="727.65" font-size="15.12" textLength="36.11" lengthAdjust="spacingAndGlyphs" fill="#f2f2f2">0,34</text>
<text x="695.47" y="750.95" font-size="15.12" textLength="56.75" lengthAdjust="spacingAndGlyphs" fill="#f2f2f2">268,36</text>
<text x="695.75" y="774.05" font-size="15.12" textLength="36.11" lengthAdjust="spacingAndGlyphs" fill="#f2f2f2">0,31</text>
<text x="695.75" y="797.25" font-size="15.12" textLength="36.11" lengthAdjust="spacingAndGlyphs" fill="#f2f2f2">0,33</text>
<text x="695.47" y="820.60" font-size="15.12" textLength="56.75" lengthAdjust="spacingAndGlyphs" fill="#f2f2f2">275,43</text>
<text x="695.47" y="843.90" font-size="15.12" textLength="36.11" lengthAdjust="spacingAndGlyphs" fill="#f2f2f2">2,86</text>
<text x="695.75" y="867.10" font-size="15.12" textLength="36.11" lengthAdjust="spacingAndGlyphs" fill="#f2f2f2">3,91</text>
<text x="766.33" y="680.30" font-size="12.94" textLength="61.60" lengthAdjust="spacingAndGlyphs" fill="#f4f4f4">Gray 35</text>
<text x="766.55" y="704.05" font-size="15.12" textLength="36.11" lengthAdjust="spacingAndGlyphs" fill="#f2f2f2">0,32</text>
<text x="766.55" y="727.65" font-size="15.12" textLength="36.11" lengthAdjust="spacingAndGlyphs" fill="#f2f2f2">0,34</text>
<text x="767.01" y="750.95" font-size="15.12" textLength="56.75" lengthAdjust="spacingAndGlyphs" fill="#f2f2f2">189,85</text>
<text x="766.55" y="774.05" font-size="15.12" textLength="36.11" lengthAdjust="spacingAndGlyphs" fill="#f2f2f2">0,31</text>
<text x="766.55" y="797.25" font-size="15.12" textLength="36.11" lengthAdjust="spacingAndGlyphs" fill="#f2f2f2">0,33</text>
<text x="767.01" y="820.60" font-size="15.12" textLength="56.75" lengthAdjust="spacingAndGlyphs" fill="#f2f2f2">191,79</text>
<text x="766.55" y="843.90" font-size="15.12" textLength="36.11" lengthAdjust="spacingAndGlyphs" fill="#f2f2f2">3,30</text>
<text x="766.83" y="867.10" font-size="15.12" textLength="36.11" lengthAdjust="spacingAndGlyphs" fill="#f2f2f2">4,00</text>
<text x="839.41" y="680.30" font-size="12.94" textLength="42.39" lengthAdjust="spacingAndGlyphs" fill="#f4f4f4">Black</text>
<text x="837.25" y="704.05" font-size="15.12" textLength="36.11" lengthAdjust="spacingAndGlyphs" fill="#f2f2f2">0,31</text>
<text x="837.25" y="727.65" font-size="15.12" textLength="36.11" lengthAdjust="spacingAndGlyphs" fill="#f2f2f2">0,28</text>
<text x="837.25" y="750.95" font-size="15.12" textLength="36.11" lengthAdjust="spacingAndGlyphs" fill="#f2f2f2">0,10</text>
<text x="837.25" y="774.05" font-size="15.12" textLength="36.11" lengthAdjust="spacingAndGlyphs" fill="#f2f2f2">0,31</text>
<text x="837.25" y="797.25" font-size="15.12" textLength="36.11" lengthAdjust="spacingAndGlyphs" fill="#f2f2f2">0,33</text>
<text x="837.25" y="820.60" font-size="15.12" textLength="36.11" lengthAdjust="spacingAndGlyphs" fill="#f2f2f2">0,00</text>
<text x="837.25" y="843.90" font-size="15.12" textLength="36.11" lengthAdjust="spacingAndGlyphs" fill="#f2f2f2">0,23</text>
<text x="837.53" y="867.10" font-size="15.12" textLength="46.43" lengthAdjust="spacingAndGlyphs" fill="#f2f2f2">46,02</text>
<text x="893.20" y="680.30" font-size="12.94" textLength="75.64" lengthAdjust="spacingAndGlyphs" fill="#f4f4f4">Dark Skin</text>
<text x="893.95" y="704.05" font-size="15.12" textLength="36.11" lengthAdjust="spacingAndGlyphs" fill="#f2f2f2">0,42</text>
<text x="893.95" y="727.65" font-size="15.12" textLength="36.11" lengthAdjust="spacingAndGlyphs" fill="#f2f2f2">0,38</text>
<text x="893.86" y="750.95" font-size="15.12" textLength="46.43" lengthAdjust="spacingAndGlyphs" fill="#f2f2f2">53,99</text>
<text x="893.95" y="774.05" font-size="15.12" textLength="36.11" lengthAdjust="spacingAndGlyphs" fill="#f2f2f2">0,40</text>
<text x="893.95" y="797.25" font-size="15.12" textLength="36.11" lengthAdjust="spacingAndGlyphs" fill="#f2f2f2">0,36</text>
<text x="893.86" y="820.60" font-size="15.12" textLength="46.43" lengthAdjust="spacingAndGlyphs" fill="#f2f2f2">56,51</text>
<text x="893.67" y="843.90" font-size="15.12" textLength="36.11" lengthAdjust="spacingAndGlyphs" fill="#f2f2f2">2,98</text>
<text x="893.77" y="867.10" font-size="15.12" textLength="34.73" lengthAdjust="spacingAndGlyphs" fill="#f2f2f2">9,11</text>
<text x="977.19" y="680.30" font-size="12.94" textLength="77.29" lengthAdjust="spacingAndGlyphs" fill="#f4f4f4">Light Skin</text>
<text x="977.95" y="704.05" font-size="15.12" textLength="36.11" lengthAdjust="spacingAndGlyphs" fill="#f2f2f2">0,39</text>
<text x="977.95" y="727.65" font-size="15.12" textLength="36.11" lengthAdjust="spacingAndGlyphs" fill="#f2f2f2">0,37</text>
<text x="978.41" y="750.95" font-size="15.12" textLength="56.75" lengthAdjust="spacingAndGlyphs" fill="#f2f2f2">198,26</text>
<text x="977.95" y="774.05" font-size="15.12" textLength="36.11" lengthAdjust="spacingAndGlyphs" fill="#f2f2f2">0,38</text>
<text x="977.95" y="797.25" font-size="15.12" textLength="36.11" lengthAdjust="spacingAndGlyphs" fill="#f2f2f2">0,36</text>
<text x="978.41" y="820.60" font-size="15.12" textLength="56.75" lengthAdjust="spacingAndGlyphs" fill="#f2f2f2">195,74</text>
<text x="977.95" y="843.90" font-size="15.12" textLength="36.11" lengthAdjust="spacingAndGlyphs" fill="#f2f2f2">3,34</text>
<text x="977.86" y="867.10" font-size="15.12" textLength="36.11" lengthAdjust="spacingAndGlyphs" fill="#f2f2f2">5,63</text>
<text x="1062.84" y="680.30" font-size="12.94" textLength="66.98" lengthAdjust="spacingAndGlyphs" fill="#f4f4f4">Blue Sky</text>
<text x="1063.55" y="704.05" font-size="15.12" textLength="36.11" lengthAdjust="spacingAndGlyphs" fill="#f2f2f2">0,25</text>
<text x="1063.55" y="727.65" font-size="15.12" textLength="36.11" lengthAdjust="spacingAndGlyphs" fill="#f2f2f2">0,28</text>
<text x="1064.01" y="750.95" font-size="15.12" textLength="56.75" lengthAdjust="spacingAndGlyphs" fill="#f2f2f2">100,97</text>
<text x="1063.55" y="774.05" font-size="15.12" textLength="36.11" lengthAdjust="spacingAndGlyphs" fill="#f2f2f2">0,25</text>
<text x="1063.55" y="797.25" font-size="15.12" textLength="36.11" lengthAdjust="spacingAndGlyphs" fill="#f2f2f2">0,27</text>
<text x="1064.01" y="820.60" font-size="15.12" textLength="56.75" lengthAdjust="spacingAndGlyphs" fill="#f2f2f2">104,89</text>
<text x="1063.83" y="843.90" font-size="15.12" textLength="36.11" lengthAdjust="spacingAndGlyphs" fill="#f2f2f2">4,71</text>
<text x="1063.27" y="867.10" font-size="15.12" textLength="36.11" lengthAdjust="spacingAndGlyphs" fill="#f2f2f2">6,59</text>
<text x="1139.09" y="680.30" font-size="12.94" textLength="57.81" lengthAdjust="spacingAndGlyphs" fill="#f4f4f4">Foliage</text>
<text x="1139.85" y="704.05" font-size="15.12" textLength="36.11" lengthAdjust="spacingAndGlyphs" fill="#f2f2f2">0,34</text>
<text x="1139.85" y="727.65" font-size="15.12" textLength="36.11" lengthAdjust="spacingAndGlyphs" fill="#f2f2f2">0,44</text>
<text x="1139.57" y="750.95" font-size="15.12" textLength="46.43" lengthAdjust="spacingAndGlyphs" fill="#f2f2f2">68,87</text>
<text x="1139.85" y="774.05" font-size="15.12" textLength="36.11" lengthAdjust="spacingAndGlyphs" fill="#f2f2f2">0,34</text>
<text x="1139.85" y="797.25" font-size="15.12" textLength="36.11" lengthAdjust="spacingAndGlyphs" fill="#f2f2f2">0,43</text>
<text x="1139.57" y="820.60" font-size="15.12" textLength="46.43" lengthAdjust="spacingAndGlyphs" fill="#f2f2f2">73,10</text>
<text x="1140.31" y="843.90" font-size="15.12" textLength="36.11" lengthAdjust="spacingAndGlyphs" fill="#f2f2f2">1,86</text>
<text x="1139.57" y="867.10" font-size="15.12" textLength="36.11" lengthAdjust="spacingAndGlyphs" fill="#f2f2f2">7,56</text>
<text x="1205.06" y="680.30" font-size="12.94" textLength="94.91" lengthAdjust="spacingAndGlyphs" fill="#f4f4f4">Blue Flower</text>
<text x="1205.85" y="704.05" font-size="15.12" textLength="36.11" lengthAdjust="spacingAndGlyphs" fill="#f2f2f2">0,27</text>
<text x="1205.85" y="727.65" font-size="15.12" textLength="36.11" lengthAdjust="spacingAndGlyphs" fill="#f2f2f2">0,26</text>
<text x="1206.31" y="750.95" font-size="15.12" textLength="56.75" lengthAdjust="spacingAndGlyphs" fill="#f2f2f2">126,99</text>
<text x="1205.85" y="774.05" font-size="15.12" textLength="36.11" lengthAdjust="spacingAndGlyphs" fill="#f2f2f2">0,27</text>
<text x="1205.85" y="797.25" font-size="15.12" textLength="36.11" lengthAdjust="spacingAndGlyphs" fill="#f2f2f2">0,25</text>
<text x="1206.31" y="820.60" font-size="15.12" textLength="56.75" lengthAdjust="spacingAndGlyphs" fill="#f2f2f2">130,80</text>
<text x="1206.31" y="843.90" font-size="15.12" textLength="36.11" lengthAdjust="spacingAndGlyphs" fill="#f2f2f2">1,42</text>
<text x="1205.85" y="867.10" font-size="15.12" textLength="36.11" lengthAdjust="spacingAndGlyphs" fill="#f2f2f2">3,79</text>
<text x="1308.58" y="680.30" font-size="12.94" textLength="102.81" lengthAdjust="spacingAndGlyphs" fill="#f4f4f4">Bluish Green</text>
<text x="1309.35" y="704.05" font-size="15.12" textLength="36.11" lengthAdjust="spacingAndGlyphs" fill="#f2f2f2">0,26</text>
<text x="1309.35" y="727.65" font-size="15.12" textLength="36.11" lengthAdjust="spacingAndGlyphs" fill="#f2f2f2">0,37</text>
<text x="1309.07" y="750.95" font-size="15.12" textLength="56.75" lengthAdjust="spacingAndGlyphs" fill="#f2f2f2">226,31</text>
<text x="1309.35" y="774.05" font-size="15.12" textLength="36.11" lengthAdjust="spacingAndGlyphs" fill="#f2f2f2">0,26</text>
<text x="1309.35" y="797.25" font-size="15.12" textLength="36.11" lengthAdjust="spacingAndGlyphs" fill="#f2f2f2">0,36</text>
<text x="1309.07" y="820.60" font-size="15.12" textLength="56.75" lengthAdjust="spacingAndGlyphs" fill="#f2f2f2">234,88</text>
<text x="1309.81" y="843.90" font-size="15.12" textLength="36.11" lengthAdjust="spacingAndGlyphs" fill="#f2f2f2">1,72</text>
<text x="1309.63" y="867.10" font-size="15.12" textLength="36.11" lengthAdjust="spacingAndGlyphs" fill="#f2f2f2">4,30</text>
<text x="1420.21" y="680.30" font-size="12.94" textLength="58.81" lengthAdjust="spacingAndGlyphs" fill="#f4f4f4">Orange</text>
<text x="1420.35" y="704.05" font-size="15.12" textLength="36.11" lengthAdjust="spacingAndGlyphs" fill="#f2f2f2">0,52</text>
<text x="1420.35" y="727.65" font-size="15.12" textLength="36.11" lengthAdjust="spacingAndGlyphs" fill="#f2f2f2">0,42</text>
<text x="1420.81" y="750.95" font-size="15.12" textLength="56.75" lengthAdjust="spacingAndGlyphs" fill="#f2f2f2">165,12</text>
<text x="1420.35" y="774.05" font-size="15.12" textLength="36.11" lengthAdjust="spacingAndGlyphs" fill="#f2f2f2">0,51</text>
<text x="1420.35" y="797.25" font-size="15.12" textLength="36.11" lengthAdjust="spacingAndGlyphs" fill="#f2f2f2">0,41</text>
<text x="1420.81" y="820.60" font-size="15.12" textLength="56.75" lengthAdjust="spacingAndGlyphs" fill="#f2f2f2">159,02</text>
<text x="1420.35" y="843.90" font-size="15.12" textLength="36.11" lengthAdjust="spacingAndGlyphs" fill="#f2f2f2">3,26</text>
<text x="1420.81" y="867.10" font-size="15.12" textLength="45.05" lengthAdjust="spacingAndGlyphs" fill="#f2f2f2">11,55</text>
<text x="1487.26" y="680.30" font-size="12.94" textLength="105.69" lengthAdjust="spacingAndGlyphs" fill="#f4f4f4">Purplish Blue</text>
<text x="1488.05" y="704.05" font-size="15.12" textLength="36.11" lengthAdjust="spacingAndGlyphs" fill="#f2f2f2">0,22</text>
<text x="1488.05" y="727.65" font-size="15.12" textLength="36.11" lengthAdjust="spacingAndGlyphs" fill="#f2f2f2">0,20</text>
<text x="1487.77" y="750.95" font-size="15.12" textLength="46.43" lengthAdjust="spacingAndGlyphs" fill="#f2f2f2">60,73</text>
<text x="1488.05" y="774.05" font-size="15.12" textLength="36.11" lengthAdjust="spacingAndGlyphs" fill="#f2f2f2">0,22</text>
<text x="1488.05" y="797.25" font-size="15.12" textLength="36.11" lengthAdjust="spacingAndGlyphs" fill="#f2f2f2">0,19</text>
<text x="1487.77" y="820.60" font-size="15.12" textLength="46.43" lengthAdjust="spacingAndGlyphs" fill="#f2f2f2">65,93</text>
<text x="1488.51" y="843.90" font-size="15.12" textLength="36.11" lengthAdjust="spacingAndGlyphs" fill="#f2f2f2">1,55</text>
<text x="1487.77" y="867.10" font-size="15.12" textLength="36.11" lengthAdjust="spacingAndGlyphs" fill="#f2f2f2">6,31</text>
<text x="1601.61" y="680.30" font-size="12.94" textLength="110.12" lengthAdjust="spacingAndGlyphs" fill="#f4f4f4">Moderate Red</text>
<text x="1602.35" y="704.05" font-size="15.12" textLength="36.11" lengthAdjust="spacingAndGlyphs" fill="#f2f2f2">0,48</text>
<text x="1602.35" y="727.65" font-size="15.12" textLength="36.11" lengthAdjust="spacingAndGlyphs" fill="#f2f2f2">0,33</text>
<text x="1602.81" y="750.95" font-size="15.12" textLength="55.37" lengthAdjust="spacingAndGlyphs" fill="#f2f2f2">107,11</text>
<text x="1602.35" y="774.05" font-size="15.12" textLength="36.11" lengthAdjust="spacingAndGlyphs" fill="#f2f2f2">0,46</text>
<text x="1602.35" y="797.25" font-size="15.12" textLength="36.11" lengthAdjust="spacingAndGlyphs" fill="#f2f2f2">0,31</text>
<text x="1602.81" y="820.60" font-size="15.12" textLength="56.75" lengthAdjust="spacingAndGlyphs" fill="#f2f2f2">104,76</text>
<text x="1602.35" y="843.90" font-size="15.12" textLength="36.11" lengthAdjust="spacingAndGlyphs" fill="#f2f2f2">3,36</text>
<text x="1602.17" y="867.10" font-size="15.12" textLength="36.11" lengthAdjust="spacingAndGlyphs" fill="#f2f2f2">9,66</text>
<text x="336.91" y="704.05" font-size="15.12" textLength="73.94" lengthAdjust="spacingAndGlyphs" fill="#f6f6f6" font-weight="bold">x: CIE31</text>
<text x="336.91" y="727.65" font-size="15.12" textLength="73.94" lengthAdjust="spacingAndGlyphs" fill="#f6f6f6" font-weight="bold">y: CIE31</text>
<text x="336.72" y="750.95" font-size="15.12" textLength="12.50" lengthAdjust="spacingAndGlyphs" fill="#f6f6f6" font-weight="bold">Y</text>
<text x="336.81" y="774.05" font-size="15.12" textLength="129.82" lengthAdjust="spacingAndGlyphs" fill="#f6f6f6" font-weight="bold">Target x:CIE31</text>
<text x="336.81" y="797.25" font-size="15.12" textLength="129.82" lengthAdjust="spacingAndGlyphs" fill="#f6f6f6" font-weight="bold">Target y:CIE31</text>
<text x="336.81" y="820.60" font-size="15.12" textLength="73.24" lengthAdjust="spacingAndGlyphs" fill="#f6f6f6" font-weight="bold">Target Y</text>
<text x="336.25" y="843.90" font-size="15.12" textLength="72.86" lengthAdjust="spacingAndGlyphs" fill="#f6f6f6" font-weight="bold">ΔE 2000</text>
<text x="336.25" y="867.10" font-size="15.12" textLength="60.32" lengthAdjust="spacingAndGlyphs" fill="#f6f6f6" font-weight="bold">ΔE ITP</text>
</g>
<rect x="321.00" y="873.40" width="1344.50" height="14.00" fill="#626262"/>
<rect x="323.7" y="874.6" width="16" height="12" rx="2" fill="#808080"/>
<path d="M335.5 876 V885.2 L329 880.6Z" fill="#383838"/>
<rect x="343" y="874.9" width="644" height="11.6" rx="5.8" fill="#484848"/>
<rect x="1648" y="874.6" width="16" height="12" rx="2" fill="#808080"/>
<path d="M1653 876 V885.2 L1659.5 880.6Z" fill="#383838"/>
<rect x="0.00" y="929.00" width="1265.00" height="62.00" fill="#3a3a3a"/>
<rect x="-33.5" y="929.4" width="62.4" height="61" rx="5" fill="url(#gB)"/>
<rect x="-33.0" y="929.9" width="61.4" height="60" rx="5" fill="none" stroke="#b4b4b4" stroke-opacity="0.35" stroke-width="1"/>
<rect x="-26.2" y="936.3" width="48.8" height="14.7" rx="4" fill="#8a84c8" stroke="#615c8c" stroke-width="1.2"/>
<text x="-23.65" y="969.70" font-size="12.79" textLength="27.72" lengthAdjust="spacingAndGlyphs" fill="#222" font-weight="bold">Blue</text>
<text x="-23.66" y="984.50" font-size="12.79" textLength="42.04" lengthAdjust="spacingAndGlyphs" fill="#222" font-weight="bold">Flower</text>
<rect x="31.5" y="929.4" width="62.4" height="61" rx="5" fill="url(#gB)"/>
<rect x="32.0" y="929.9" width="61.4" height="60" rx="5" fill="none" stroke="#b4b4b4" stroke-opacity="0.35" stroke-width="1"/>
<rect x="38.8" y="936.3" width="48.8" height="14.7" rx="4" fill="#64c8b2" stroke="#468c7d" stroke-width="1.2"/>
<text x="43.42" y="969.70" font-size="12.79" textLength="38.50" lengthAdjust="spacingAndGlyphs" fill="#222" font-weight="bold">Bluish</text>
<text x="43.72" y="984.50" font-size="12.79" textLength="37.71" lengthAdjust="spacingAndGlyphs" fill="#222" font-weight="bold">Green</text>
<rect x="96.5" y="929.4" width="62.4" height="61" rx="5" fill="url(#gB)"/>
<rect x="97.0" y="929.9" width="61.4" height="60" rx="5" fill="none" stroke="#b4b4b4" stroke-opacity="0.35" stroke-width="1"/>
<rect x="103.8" y="936.3" width="48.8" height="29.4" rx="4" fill="#e07c28" stroke="#9d571c" stroke-width="1.2"/>
<text x="105.14" y="984.50" font-size="12.79" textLength="45.00" lengthAdjust="spacingAndGlyphs" fill="#222" font-weight="bold">Orange</text>
<rect x="161.5" y="929.4" width="62.4" height="61" rx="5" fill="url(#gB)"/>
<rect x="162.0" y="929.9" width="61.4" height="60" rx="5" fill="none" stroke="#b4b4b4" stroke-opacity="0.35" stroke-width="1"/>
<rect x="168.8" y="936.3" width="48.8" height="14.7" rx="4" fill="#4c60b4" stroke="#35437e" stroke-width="1.2"/>
<text x="166.57" y="969.70" font-size="12.79" textLength="52.19" lengthAdjust="spacingAndGlyphs" fill="#222" font-weight="bold">Purplish</text>
<text x="166.59" y="984.50" font-size="12.79" textLength="27.72" lengthAdjust="spacingAndGlyphs" fill="#222" font-weight="bold">Blue</text>
<rect x="226.5" y="929.4" width="62.4" height="61" rx="5" fill="url(#gB)"/>
<rect x="227.0" y="929.9" width="61.4" height="60" rx="5" fill="none" stroke="#b4b4b4" stroke-opacity="0.35" stroke-width="1"/>
<rect x="233.8" y="936.3" width="48.8" height="14.7" rx="4" fill="#cc5866" stroke="#8f3e47" stroke-width="1.2"/>
<text x="226.56" y="969.70" font-size="12.79" textLength="61.81" lengthAdjust="spacingAndGlyphs" fill="#222" font-weight="bold">Moderate</text>
<text x="226.61" y="984.50" font-size="12.79" textLength="24.65" lengthAdjust="spacingAndGlyphs" fill="#222" font-weight="bold">Red</text>
<rect x="291.5" y="929.4" width="62.4" height="61" rx="5" fill="url(#gB)"/>
<rect x="292.0" y="929.9" width="61.4" height="60" rx="5" fill="none" stroke="#b4b4b4" stroke-opacity="0.35" stroke-width="1"/>
<rect x="298.8" y="936.3" width="48.8" height="29.4" rx="4" fill="#5c3c6c" stroke="#402a4c" stroke-width="1.2"/>
<text x="302.18" y="984.50" font-size="12.79" textLength="40.60" lengthAdjust="spacingAndGlyphs" fill="#222" font-weight="bold">Purple</text>
<rect x="356.5" y="929.4" width="62.4" height="61" rx="5" fill="url(#gB)"/>
<rect x="357.0" y="929.9" width="61.4" height="60" rx="5" fill="none" stroke="#b4b4b4" stroke-opacity="0.35" stroke-width="1"/>
<rect x="363.8" y="936.3" width="48.8" height="14.7" rx="4" fill="#a4c440" stroke="#73892d" stroke-width="1.2"/>
<text x="367.68" y="969.70" font-size="12.79" textLength="39.81" lengthAdjust="spacingAndGlyphs" fill="#222" font-weight="bold">Yellow</text>
<text x="367.35" y="984.50" font-size="12.79" textLength="37.71" lengthAdjust="spacingAndGlyphs" fill="#222" font-weight="bold">Green</text>
<rect x="421.5" y="929.4" width="62.4" height="61" rx="5" fill="url(#gB)"/>
<rect x="422.0" y="929.9" width="61.4" height="60" rx="5" fill="none" stroke="#b4b4b4" stroke-opacity="0.35" stroke-width="1"/>
<rect x="428.8" y="936.3" width="48.8" height="14.7" rx="4" fill="#eca832" stroke="#a57623" stroke-width="1.2"/>
<text x="430.14" y="969.70" font-size="12.79" textLength="45.00" lengthAdjust="spacingAndGlyphs" fill="#222" font-weight="bold">Orange</text>
<text x="430.46" y="984.50" font-size="12.79" textLength="39.81" lengthAdjust="spacingAndGlyphs" fill="#222" font-weight="bold">Yellow</text>
<rect x="486.5" y="929.4" width="62.4" height="61" rx="5" fill="url(#gB)"/>
<rect x="487.0" y="929.9" width="61.4" height="60" rx="5" fill="none" stroke="#b4b4b4" stroke-opacity="0.35" stroke-width="1"/>
<rect x="493.8" y="936.3" width="48.8" height="29.4" rx="4" fill="#343c9c" stroke="#242a6d" stroke-width="1.2"/>
<text x="503.63" y="984.50" font-size="12.79" textLength="27.72" lengthAdjust="spacingAndGlyphs" fill="#222" font-weight="bold">Blue</text>
<rect x="551.5" y="929.4" width="62.4" height="61" rx="5" fill="url(#gB)"/>
<rect x="552.0" y="929.9" width="61.4" height="60" rx="5" fill="none" stroke="#b4b4b4" stroke-opacity="0.35" stroke-width="1"/>
<rect x="558.8" y="936.3" width="48.8" height="29.4" rx="4" fill="#489c4c" stroke="#326d35" stroke-width="1.2"/>
<text x="563.98" y="984.50" font-size="12.79" textLength="37.71" lengthAdjust="spacingAndGlyphs" fill="#222" font-weight="bold">Green</text>
<rect x="616.5" y="929.4" width="62.4" height="61" rx="5" fill="url(#gB)"/>
<rect x="617.0" y="929.9" width="61.4" height="60" rx="5" fill="none" stroke="#b4b4b4" stroke-opacity="0.35" stroke-width="1"/>
<rect x="623.8" y="936.3" width="48.8" height="29.4" rx="4" fill="#b43038" stroke="#7e2227" stroke-width="1.2"/>
<text x="635.37" y="984.50" font-size="12.79" textLength="24.65" lengthAdjust="spacingAndGlyphs" fill="#222" font-weight="bold">Red</text>
<rect x="681.5" y="929.4" width="62.4" height="61" rx="5" fill="url(#gB)"/>
<rect x="682.0" y="929.9" width="61.4" height="60" rx="5" fill="none" stroke="#b4b4b4" stroke-opacity="0.35" stroke-width="1"/>
<rect x="688.8" y="936.3" width="48.8" height="29.4" rx="4" fill="#f0c824" stroke="#a88c19" stroke-width="1.2"/>
<text x="692.68" y="984.50" font-size="12.79" textLength="39.81" lengthAdjust="spacingAndGlyphs" fill="#222" font-weight="bold">Yellow</text>
<rect x="746.5" y="929.4" width="62.4" height="61" rx="5" fill="url(#gB)"/>
<rect x="747.0" y="929.9" width="61.4" height="60" rx="5" fill="none" stroke="#b4b4b4" stroke-opacity="0.35" stroke-width="1"/>
<rect x="753.8" y="936.3" width="48.8" height="29.4" rx="4" fill="#c0589c" stroke="#863e6d" stroke-width="1.2"/>
<text x="749.97" y="984.50" font-size="12.79" textLength="54.48" lengthAdjust="spacingAndGlyphs" fill="#222" font-weight="bold">Magenta</text>
<rect x="811.5" y="929.4" width="62.4" height="61" rx="5" fill="url(#gB)"/>
<rect x="812.0" y="929.9" width="61.4" height="60" rx="5" fill="none" stroke="#b4b4b4" stroke-opacity="0.35" stroke-width="1"/>
<rect x="818.8" y="936.3" width="48.8" height="29.4" rx="4" fill="#0888a8" stroke="#065f76" stroke-width="1.2"/>
<text x="826.88" y="984.50" font-size="12.79" textLength="31.90" lengthAdjust="spacingAndGlyphs" fill="#222" font-weight="bold">Cyan</text>
<rect x="876.5" y="929.4" width="62.4" height="61" rx="5" fill="url(#gB)"/>
<rect x="877.0" y="929.9" width="61.4" height="60" rx="5" fill="none" stroke="#b4b4b4" stroke-opacity="0.35" stroke-width="1"/>
<rect x="883.8" y="936.3" width="48.8" height="29.4" rx="4" fill="#ff0000" stroke="#b20000" stroke-width="1.2"/>
<text x="877.36" y="984.50" font-size="12.79" textLength="60.73" lengthAdjust="spacingAndGlyphs" fill="#222" font-weight="bold">100% Red</text>
<rect x="941.5" y="929.4" width="62.4" height="61" rx="5" fill="url(#gB)"/>
<rect x="942.0" y="929.9" width="61.4" height="60" rx="5" fill="none" stroke="#b4b4b4" stroke-opacity="0.35" stroke-width="1"/>
<rect x="948.8" y="936.3" width="48.8" height="14.7" rx="4" fill="#00ff00" stroke="#00b200" stroke-width="1.2"/>
<text x="953.72" y="969.70" font-size="12.79" textLength="33.37" lengthAdjust="spacingAndGlyphs" fill="#222" font-weight="bold">100%</text>
<text x="953.98" y="984.50" font-size="12.79" textLength="37.71" lengthAdjust="spacingAndGlyphs" fill="#222" font-weight="bold">Green</text>
<rect x="1006.5" y="929.4" width="62.4" height="61" rx="5" fill="url(#gB)"/>
<rect x="1007.0" y="929.9" width="61.4" height="60" rx="5" fill="none" stroke="#b4b4b4" stroke-opacity="0.35" stroke-width="1"/>
<rect x="1013.8" y="936.3" width="48.8" height="14.7" rx="4" fill="#0000ff" stroke="#0000b2" stroke-width="1.2"/>
<text x="1020.77" y="969.70" font-size="12.79" textLength="33.37" lengthAdjust="spacingAndGlyphs" fill="#222" font-weight="bold">100%</text>
<text x="1020.72" y="984.50" font-size="12.79" textLength="27.72" lengthAdjust="spacingAndGlyphs" fill="#222" font-weight="bold">Blue</text>
<rect x="1071.5" y="929.4" width="62.4" height="61" rx="5" fill="url(#gB)"/>
<rect x="1072.0" y="929.9" width="61.4" height="60" rx="5" fill="none" stroke="#b4b4b4" stroke-opacity="0.35" stroke-width="1"/>
<rect x="1078.8" y="936.3" width="48.8" height="14.7" rx="4" fill="#00ffff" stroke="#00b2b2" stroke-width="1.2"/>
<text x="1085.77" y="969.70" font-size="12.79" textLength="33.37" lengthAdjust="spacingAndGlyphs" fill="#222" font-weight="bold">100%</text>
<text x="1086.03" y="984.50" font-size="12.79" textLength="31.90" lengthAdjust="spacingAndGlyphs" fill="#222" font-weight="bold">Cyan</text>
<rect x="1136.5" y="929.4" width="62.4" height="61" rx="5" fill="url(#gB)"/>
<rect x="1137.0" y="929.9" width="61.4" height="60" rx="5" fill="none" stroke="#b4b4b4" stroke-opacity="0.35" stroke-width="1"/>
<rect x="1143.8" y="936.3" width="48.8" height="14.7" rx="4" fill="#ff00ff" stroke="#b200b2" stroke-width="1.2"/>
<text x="1140.06" y="969.70" font-size="12.79" textLength="33.37" lengthAdjust="spacingAndGlyphs" fill="#222" font-weight="bold">100%</text>
<text x="1139.97" y="984.50" font-size="12.79" textLength="54.48" lengthAdjust="spacingAndGlyphs" fill="#222" font-weight="bold">Magenta</text>
<rect x="1201.5" y="929.4" width="62.4" height="61" rx="5" fill="url(#gBsel)"/>
<rect x="1208.8" y="936.3" width="48.8" height="14.7" rx="4" fill="#ffff00" stroke="#b2b200" stroke-width="1.2"/>
<text x="1212.09" y="969.70" font-size="12.79" textLength="33.37" lengthAdjust="spacingAndGlyphs" fill="#fff" font-weight="bold">100%</text>
<text x="1212.68" y="984.50" font-size="12.79" textLength="39.81" lengthAdjust="spacingAndGlyphs" fill="#fff" font-weight="bold">Yellow</text>
<rect x="0.00" y="990.60" width="1265.00" height="15.40" fill="#636363"/>
<rect x="2" y="992.8" width="11.6" height="11.8" rx="2" fill="#8a8a8a" stroke="#a0a0a0" stroke-width="0.8"/>
<path d="M10.3 994.4 V1003.2 L4.8 998.8Z" fill="#333"/>
<rect x="449.7" y="992.3" width="796" height="12.6" rx="6.3" fill="#484848"/>
<rect x="1250" y="992.8" width="12.6" height="11.8" rx="2" fill="#8a8a8a" stroke="#a0a0a0" stroke-width="0.8"/>
<path d="M1253.8 994.4 V1003.2 L1259.4 998.8Z" fill="#333"/>
<rect x="0.00" y="929.00" width="1.50" height="77.00" fill="#1c1c1c"/>
<rect x="1264.00" y="929.00" width="404.00" height="77.00" fill="#2a2a2a"/>
<path d="M1265.2 952 V934.4 Q1265.2 929.4 1270.2 929.4 H1320.2 Q1325.2 929.4 1325.2 934.4 V952Z" fill="url(#gS1)"/>
<rect x="1265.20" y="953.00" width="60.00" height="53.00" fill="url(#gS2)"/>
<circle cx="1295.3" cy="940.8" r="9.4" fill="url(#gC1c)"/>
<path d="M1289.7 943 L1295.3 937.2 L1300.9 943Z" fill="#333"/>
<rect x="1276.8" y="961.6" width="36" height="35.4" rx="5" fill="url(#gSq)" stroke="#222" stroke-width="2.6"/>
<rect x="1287.10" y="971.00" width="17.00" height="17.00" fill="#000"/>
<rect x="1326.20" y="929.00" width="56.80" height="37.80" fill="url(#gC1)"/>
<circle cx="1355.1" cy="948.3" r="12" fill="url(#gC1c)"/>
<rect x="1384.20" y="929.00" width="55.30" height="37.80" fill="url(#gC1)"/>
<circle cx="1412.4" cy="948.3" r="12" fill="url(#gC1c)"/>
<rect x="1440.70" y="929.00" width="55.50" height="37.80" fill="url(#gC2)"/>
<circle cx="1468.7" cy="948.3" r="12" fill="url(#gC2c)"/>
<rect x="1497.40" y="929.00" width="54.50" height="37.80" fill="url(#gC1)"/>
<circle cx="1525.4" cy="948.3" r="12" fill="url(#gC1c)"/>
<rect x="1553.10" y="929.00" width="55.40" height="37.80" fill="url(#gC3)"/>
<circle cx="1582" cy="948.3" r="12" fill="url(#gC3c)"/>
<rect x="1609.70" y="929.00" width="58.30" height="37.80" fill="url(#gC1)"/>
<circle cx="1638.7" cy="948.3" r="12" fill="url(#gC1c)"/>
<rect x="1350.60" y="943.70" width="9.40" height="9.40" fill="#333"/>
<path d="M1409.2 942.6 V954.6 L1419.5 948.6Z" fill="#333"/>
<path d="M1465.2 943.2 H1462.6 V953.6 H1465.2 M1472.2 943.2 H1474.8 V953.6 H1472.2" fill="none" stroke="#2a2a2a" stroke-width="2.2"/>
<circle cx="1467" cy="948.4" r="1.1" fill="#2a2a2a"/><circle cx="1470.4" cy="948.4" r="1.1" fill="#2a2a2a"/>
<path d="M1525.4 948.3 C1523.4 945.2 1521.4 944.9 1519.8 946 C1518 947.3 1518 949.4 1519.8 950.6 C1521.4 951.7 1523.4 951.4 1525.4 948.3 C1527.4 945.2 1529.4 944.9 1531 946 C1532.8 947.3 1532.8 949.4 1531 950.6 C1529.4 951.7 1527.4 951.4 1525.4 948.3Z" fill="none" stroke="#343434" stroke-width="2"/>
<path d="M1576.6 947.2 A5.6 5.6 0 0 1 1586.6 945.2 M1587.4 949.6 A5.6 5.6 0 0 1 1577.4 951.6" fill="none" stroke="#1c1c1c" stroke-width="2.4"/>
<path d="M1588.6 942.2 V947.6 H1583.4Z M1575.4 954.6 V949.2 H1580.6Z" fill="#1c1c1c"/>
<rect x="1326.20" y="967.90" width="170.20" height="38.20" fill="url(#gBk)"/>
<rect x="1498.00" y="967.90" width="170.00" height="38.20" fill="url(#gBk)"/>
<circle cx="1364.5" cy="986.7" r="12" fill="url(#gBkc)"/>
<circle cx="1631.7" cy="986.7" r="12" fill="url(#gBkc)"/>
<path d="M1364.2 981.6 L1359.6 986.8 L1364.2 992 M1369.4 981.6 L1364.8 986.8 L1369.4 992" fill="none" stroke="#383838" stroke-width="1.8"/>
<path d="M1627.4 981.6 L1632 986.8 L1627.4 992 M1632.6 981.6 L1637.2 986.8 L1632.6 992" fill="none" stroke="#383838" stroke-width="1.8"/>
<text x="1397.10" y="996.60" font-size="28.05" textLength="63.85" lengthAdjust="spacingAndGlyphs" fill="#303030" stroke="#303030" stroke-width="0.8">Back</text>
<text x="1529.80" y="996.40" font-size="27.76" textLength="66.80" lengthAdjust="spacingAndGlyphs" fill="#303030" stroke="#303030" stroke-width="0.8">Next</text>
</svg>
<div style="position:absolute;left:1018px;top:120.2px;width:639.5px;height:490.8px;overflow:hidden;background:#262626"><div style="position:absolute;left:0;top:0;width:699.5px;height:490.8px;clip-path:polygon(273.8px 475.2px,273.7px 475.2px,273.6px 475.2px,273.5px 475.2px,273.4px 475.2px,273.3px 475.2px,273.1px 475.2px,272.9px 475.2px,272.8px 475.2px,272.7px 475.2px,272.6px 475.2px,272.4px 475.2px,272.2px 475.2px,271.9px 475.2px,271.6px 475.2px,271.3px 475.2px,270.9px 475.2px,270.6px 475.2px,270.1px 475.2px,269.6px 475.2px,268.8px 475.2px,267.8px 475.2px,266.7px 475.2px,265.4px 475.2px,264.0px 474.4px,262.3px 473.1px,260.3px 471.5px,258.1px 469.8px,255.7px 467.8px,253.1px 465.5px,250.2px 463.0px,247.0px 460.4px,243.5px 457.4px,239.5px 454.2px,235.1px 450.5px,230.3px 446.6px,225.2px 442.3px,219.6px 437.7px,213.6px 432.5px,207.0px 426.7px,200.0px 420.2px,192.6px 413.1px,184.5px 404.7px,175.4px 394.6px,165.0px 382.3px,153.6px 367.9px,141.5px 351.8px,128.8px 333.8px,115.5px 314.0px,101.9px 292.5px,88.3px 269.8px,74.7px 246.5px,61.7px 222.8px,49.8px 199.2px,39.2px 176.3px,30.0px 154.4px,22.0px 134.0px,15.4px 115.4px,10.2px 98.8px,6.4px 84.2px,3.7px 71.4px,2.1px 60.4px,1.5px 51.0px,1.8px 42.8px,2.9px 35.8px,4.9px 29.8px,7.7px 24.8px,11.1px 20.7px,15.2px 17.6px,19.7px 15.2px,24.6px 13.6px,29.9px 12.5px,35.5px 11.8px,41.3px 11.4px,47.3px 11.1px,53.4px 11.1px,59.4px 11.1px,65.5px 11.2px,71.7px 11.3px,78.0px 11.6px,84.4px 12.0px,91.1px 12.4px,98.0px 12.9px,105.1px 13.5px,112.5px 14.2px,120.1px 14.9px,128.1px 15.7px,136.3px 16.5px,144.9px 17.4px,153.9px 18.4px,163.2px 19.4px,172.9px 20.5px,183.0px 21.6px,193.5px 22.8px,204.5px 24.0px,215.9px 25.3px,227.8px 26.6px,240.1px 28.1px,252.8px 29.5px,266.0px 31.0px,279.6px 32.6px,293.6px 34.2px,308.1px 35.9px,322.8px 37.6px,337.9px 39.3px,353.3px 41.1px,368.9px 42.8px,384.6px 44.7px,400.0px 46.4px,415.1px 48.2px,430.1px 49.9px,445.0px 51.6px,459.7px 53.3px,473.8px 54.9px,487.2px 56.4px,500.0px 57.9px,512.3px 59.3px,523.9px 60.6px,534.8px 61.9px,545.0px 63.1px,554.5px 64.2px,563.3px 65.2px,571.6px 66.1px,579.2px 67.0px,586.4px 67.8px,593.1px 68.6px,599.5px 69.3px,605.6px 70.0px,611.2px 70.7px,616.5px 71.3px,621.4px 71.8px,625.9px 72.4px,630.1px 72.8px,633.8px 73.3px,637.1px 73.6px,640.0px 74.0px,642.7px 74.3px,645.2px 74.6px,647.3px 74.8px,649.3px 75.0px,651.0px 75.2px,652.4px 75.4px,653.6px 75.5px,654.7px 75.7px,655.7px 75.8px,656.7px 75.9px,657.6px 76.0px,658.4px 76.1px,659.2px 76.2px,660.0px 76.3px,660.8px 76.4px,661.5px 76.4px,662.2px 76.5px,662.8px 76.6px,663.2px 76.6px,663.5px 76.7px,663.8px 76.7px,664.0px 76.7px,664.2px 76.8px,664.4px 76.8px,664.4px 76.8px)"><div style="position:absolute;left:0;top:0;width:699.5px;height:490.8px;background:conic-gradient(from 0deg at 211.36px 108.03px,#e8ff00 0deg,#f1ff00 2deg,#faff00 4deg,#fffa00 6deg,#fff100 8deg,#ffe800 10deg,#ffe000 12deg,#ffd800 14deg,#ffd000 16deg,#ffc900 18deg,#ffc200 20deg,#ffbb00 22deg,#ffb500 24deg,#ffae00 26deg,#ffa800 28deg,#ffa200 30deg,#ff9c00 32deg,#ff9600 34deg,#ff9000 36deg,#ff8a00 38deg,#ff8400 40deg,#ff7e00 42deg,#ff7900 44deg,#ff7300 46deg,#ff6d00 48deg,#ff6800 50deg,#ff6200 52deg,#ff5c00 54deg,#ff5600 56deg,#ff5000 58deg,#ff4a00 60deg,#ff4400 62deg,#ff3d00 64deg,#ff3700 66deg,#ff3000 68deg,#ff2900 70deg,#ff2200 72deg,#ff1b00 74deg,#ff1300 76deg,#ff0b00 78deg,#ff0200 80deg,#ff0006 82deg,#ff000f 84deg,#ff0017 86deg,#ff0020 88deg,#ff0028 90deg,#ff0030 92deg,#ff0038 94deg,#ff0040 96deg,#ff0049 98deg,#ff0051 100deg,#ff0059 102deg,#ff0061 104deg,#ff006a 106deg,#ff0072 108deg,#ff007b 110deg,#ff0084 112deg,#ff008d 114deg,#ff0096 116deg,#ff009f 118deg,#ff00a9 120deg,#ff00b3 122deg,#ff00be 124deg,#ff00c8 126deg,#ff00d4 128deg,#ff00df 130deg,#ff00ec 132deg,#ff00f9 134deg,#f800ff 136deg,#eb00ff 138deg,#de00ff 140deg,#d200ff 142deg,#c700ff 144deg,#bc00ff 146deg,#b100ff 148deg,#a600ff 150deg,#9c00ff 152deg,#9200ff 154deg,#8800ff 156deg,#7f00ff 158deg,#7500ff 160deg,#6c00ff 162deg,#6300ff 164deg,#5a00ff 166deg,#5100ff 168deg,#4800ff 170deg,#3f00ff 172deg,#3600ff 174deg,#2c00ff 176deg,#2300ff 178deg,#1a00ff 180deg,#1100ff 182deg,#0700ff 184deg,#0002ff 186deg,#000cff 188deg,#0014ff 190deg,#001dff 192deg,#0025ff 194deg,#002cff 196deg,#0034ff 198deg,#003bff 200deg,#0042ff 202deg,#0048ff 204deg,#004fff 206deg,#0055ff 208deg,#005bff 210deg,#0062ff 212deg,#0068ff 214deg,#006eff 216deg,#0073ff 218deg,#0079ff 220deg,#007fff 222deg,#0085ff 224deg,#008bff 226deg,#0090ff 228deg,#0096ff 230deg,#009cff 232deg,#00a2ff 234deg,#00a8ff 236deg,#00aeff 238deg,#00b4ff 240deg,#00baff 242deg,#00c1ff 244deg,#00c7ff 246deg,#00ceff 248deg,#00d5ff 250deg,#00dcff 252deg,#00e4ff 254deg,#00ecff 256deg,#00f4ff 258deg,#00fcff 260deg,#00fff9 262deg,#00fff0 264deg,#00ffe8 266deg,#00ffdf 268deg,#00ffd7 270deg,#00ffcf 272deg,#00ffc7 274deg,#00ffbe 276deg,#00ffb6 278deg,#00ffae 280deg,#00ffa5 282deg,#00ff9d 284deg,#00ff95 286deg,#00ff8c 288deg,#00ff83 290deg,#00ff7a 292deg,#00ff71 294deg,#00ff68 296deg,#00ff5e 298deg,#00ff55 300deg,#00ff4a 302deg,#00ff40 304deg,#00ff35 306deg,#00ff2a 308deg,#00ff1e 310deg,#00ff11 312deg,#00ff04 314deg,#09ff00 316deg,#16ff00 318deg,#23ff00 320deg,#2fff00 322deg,#3aff00 324deg,#46ff00 326deg,#50ff00 328deg,#5bff00 330deg,#65ff00 332deg,#6fff00 334deg,#79ff00 336deg,#82ff00 338deg,#8cff00 340deg,#95ff00 342deg,#9eff00 344deg,#a8ff00 346deg,#b1ff00 348deg,#baff00 350deg,#c3ff00 352deg,#ccff00 354deg,#d5ff00 356deg,#deff00 358deg,#e8ff00 360deg)"></div><div style="position:absolute;left:0;top:0;width:699.5px;height:490.8px;background:#ff0000;clip-path:polygon(480.4px 63.4px,1969.7px 242.0px,1502.7px -1034.3px)"></div><div style="position:absolute;left:0;top:0;width:699.5px;height:490.8px;background:#00ff00;clip-path:polygon(133.2px 30.9px,-68.1px -1455.5px,-1363.4px -69.5px)"></div><div style="position:absolute;left:0;top:0;width:699.5px;height:490.8px;background:#0000ff;clip-path:polygon(187.0px 362.3px,-891.4px 1405.0px,465.9px 1836.1px)"></div><div style="position:absolute;left:0;top:0;width:699.5px;height:490.8px;background:conic-gradient(from 214.464deg at 480.38px 63.36px,#0000ff 0deg,#0000ff 10.000deg,#0003ff 11.272deg,#0007ff 12.544deg,#000aff 13.816deg,#000eff 15.088deg,#0011ff 16.359deg,#0015ff 17.631deg,#0019ff 18.903deg,#001eff 20.175deg,#0022ff 21.447deg,#0027ff 22.719deg,#002cff 23.991deg,#0032ff 25.263deg,#0038ff 26.534deg,#003eff 27.806deg,#0044ff 29.078deg,#004bff 30.350deg,#0053ff 31.622deg,#005bff 32.894deg,#0064ff 34.166deg,#006eff 35.438deg,#0079ff 36.709deg,#0085ff 37.981deg,#0092ff 39.253deg,#00a1ff 40.525deg,#00b2ff 41.797deg,#00c5ff 43.069deg,#00daff 44.341deg,#00f4ff 45.613deg,#00ffee 46.884deg,#00ffd2 48.156deg,#00ffb8 49.428deg,#00ffa0 50.700deg,#00ff89 51.972deg,#00ff72 53.244deg,#00ff5d 54.516deg,#00ff49 55.788deg,#00ff36 57.060deg,#00ff23 58.331deg,#00ff11 59.603deg,#00ff00 60.875deg,#00ff00 70.875deg);clip-path:polygon(133.2px 30.9px,187.0px 362.3px,-863.7px 1432.8px,-1360.3px -108.7px)"></div><div style="position:absolute;left:0;top:0;width:699.5px;height:490.8px;background:conic-gradient(from 85.339deg at 133.23px 30.91px,#ff0000 0deg,#ff0000 10.000deg,#ff0008 11.886deg,#ff0010 13.772deg,#ff0019 15.658deg,#ff0021 17.545deg,#ff002a 19.431deg,#ff0033 21.317deg,#ff003d 23.203deg,#ff0047 25.089deg,#ff0051 26.975deg,#ff005b 28.861deg,#ff0066 30.748deg,#ff0072 32.634deg,#ff007e 34.520deg,#ff008b 36.406deg,#ff0098 38.292deg,#ff00a7 40.178deg,#ff00b6 42.065deg,#ff00c7 43.951deg,#ff00d8 45.837deg,#ff00ec 47.723deg,#fd00ff 49.609deg,#e900ff 51.495deg,#d500ff 53.381deg,#c300ff 55.268deg,#b200ff 57.154deg,#a300ff 59.040deg,#9400ff 60.926deg,#8500ff 62.812deg,#7800ff 64.698deg,#6b00ff 66.584deg,#5f00ff 68.471deg,#5300ff 70.357deg,#4700ff 72.243deg,#3c00ff 74.129deg,#3100ff 76.015deg,#2700ff 77.901deg,#1d00ff 79.788deg,#1300ff 81.674deg,#0900ff 83.560deg,#0000ff 85.446deg,#0000ff 95.446deg);clip-path:polygon(187.0px 362.3px,480.4px 63.4px,1973.9px 202.9px,427.2px 1842.9px)"></div><div style="position:absolute;left:0;top:0;width:699.5px;height:490.8px;background:conic-gradient(from 340.785deg at 186.99px 362.28px,#00ff00 0deg,#00ff00 10.000deg,#13ff00 11.342deg,#26ff00 12.684deg,#3bff00 14.026deg,#50ff00 15.368deg,#66ff00 16.710deg,#7dff00 18.052deg,#95ff00 19.394deg,#afff00 20.736deg,#c9ff00 22.078deg,#e5ff00 23.420deg,#fffb00 24.762deg,#ffe000 26.104deg,#ffc900 27.446deg,#ffb500 28.788deg,#ffa300 30.130deg,#ff9400 31.472deg,#ff8700 32.814deg,#ff7b00 34.155deg,#ff7000 35.497deg,#ff6600 36.839deg,#ff5d00 38.181deg,#ff5500 39.523deg,#ff4d00 40.865deg,#ff4600 42.207deg,#ff3f00 43.549deg,#ff3900 44.891deg,#ff3400 46.233deg,#ff2e00 47.575deg,#ff2900 48.917deg,#ff2500 50.259deg,#ff2000 51.601deg,#ff1c00 52.943deg,#ff1800 54.285deg,#ff1400 55.627deg,#ff1000 56.969deg,#ff0d00 58.311deg,#ff0900 59.653deg,#ff0600 60.995deg,#ff0300 62.337deg,#ff0000 63.679deg,#ff0000 73.679deg);clip-path:polygon(480.4px 63.4px,133.2px 30.9px,-107.0px -1449.7px,1531.1px -1007.2px)"></div></div></div>
<svg width="1668" height="1006" viewBox="0 0 1668 1006">
<defs><clipPath id="plotclip"><rect x="1018" y="120.2" width="639.5" height="490.8"/></clipPath>
<clipPath id="insclip"><rect x="1453.2" y="439.4" width="197.2" height="129.4"/></clipPath>
<linearGradient id="gIns" gradientUnits="userSpaceOnUse" x1="1463.7" y1="425.3" x2="1639.9" y2="582.1"><stop offset="0" stop-color="#a4ff00"/><stop offset="0.3" stop-color="#d4ff08"/><stop offset="0.5" stop-color="#ffff14"/><stop offset="0.72" stop-color="#ffd808"/><stop offset="1" stop-color="#ffa600"/></linearGradient>
<radialGradient id="gGlow"><stop offset="0" stop-color="#fff" stop-opacity="0.8"/><stop offset="0.35" stop-color="#fff" stop-opacity="0.5"/><stop offset="1" stop-color="#fff" stop-opacity="0"/></radialGradient>
<linearGradient id="gEdgeR" x1="0" y1="0" x2="1" y2="0"><stop offset="0" stop-color="#161616" stop-opacity="0"/><stop offset="0.45" stop-color="#181818" stop-opacity="0.75"/><stop offset="1" stop-color="#161616" stop-opacity="0.95"/></linearGradient>
</defs>
<g clip-path="url(#plotclip)">
<polygon fill="#fff" fill-opacity="0.0156" points="1493.8,184.3 1151.7,151.5 1205.4,478.6"/>
<polygon fill="#fff" fill-opacity="0.0159" points="1482.1,186.3 1152.8,152.7 1206.3,468.7"/>
<polygon fill="#fff" fill-opacity="0.0161" points="1469.9,188.3 1154.1,153.9 1207.3,458.3"/>
<polygon fill="#fff" fill-opacity="0.0164" points="1457.8,190.3 1155.4,155.3 1208.3,447.8"/>
<polygon fill="#fff" fill-opacity="0.0167" points="1446.0,192.3 1156.8,156.6 1209.3,437.5"/>
<polygon fill="#fff" fill-opacity="0.0169" points="1434.7,194.1 1158.3,158.1 1210.3,427.5"/>
<polygon fill="#fff" fill-opacity="0.0172" points="1424.0,195.9 1159.7,159.5 1211.2,418.0"/>
<polygon fill="#fff" fill-opacity="0.0175" points="1413.8,197.6 1161.2,161.0 1212.0,408.8"/>
<polygon fill="#fff" fill-opacity="0.0179" points="1404.2,199.2 1162.7,162.4 1212.9,400.1"/>
<polygon fill="#fff" fill-opacity="0.0182" points="1395.2,200.7 1164.2,163.9 1213.7,391.9"/>
<polygon fill="#fff" fill-opacity="0.0185" points="1386.6,202.1 1165.7,165.4 1214.4,384.0"/>
<polygon fill="#fff" fill-opacity="0.0189" points="1378.5,203.5 1167.2,166.9 1215.1,376.5"/>
<polygon fill="#fff" fill-opacity="0.0192" points="1370.9,204.7 1168.7,168.4 1215.8,369.4"/>
<polygon fill="#fff" fill-opacity="0.0196" points="1363.7,205.9 1170.2,169.8 1216.5,362.6"/>
<polygon fill="#fff" fill-opacity="0.0200" points="1356.9,207.0 1171.7,171.3 1217.1,356.2"/>
<polygon fill="#fff" fill-opacity="0.0204" points="1350.5,208.1 1173.2,172.8 1217.7,350.1"/>
<polygon fill="#fff" fill-opacity="0.0208" points="1344.5,209.1 1174.6,174.2 1218.2,344.4"/>
<polygon fill="#fff" fill-opacity="0.0213" points="1338.8,210.1 1176.1,175.7 1218.8,338.9"/>
<polygon fill="#fff" fill-opacity="0.0217" points="1333.3,211.0 1177.5,177.1 1219.3,333.6"/>
<polygon fill="#fff" fill-opacity="0.0222" points="1328.2,211.8 1179.0,178.5 1219.7,328.6"/>
<polygon fill="#fff" fill-opacity="0.0227" points="1323.3,212.6 1180.4,179.9 1220.2,323.9"/>
<polygon fill="#fff" fill-opacity="0.0233" points="1318.7,213.4 1181.8,181.3 1220.6,319.3"/>
<polygon fill="#fff" fill-opacity="0.0238" points="1314.3,214.1 1183.2,182.7 1221.0,315.0"/>
<polygon fill="#fff" fill-opacity="0.0244" points="1310.1,214.8 1184.6,184.1 1221.4,310.9"/>
<polygon fill="#fff" fill-opacity="0.0250" points="1306.1,215.5 1186.0,185.4 1221.8,306.9"/>
<polygon fill="#fff" fill-opacity="0.0256" points="1302.3,216.1 1187.4,186.8 1222.2,303.2"/>
<polygon fill="#fff" fill-opacity="0.0263" points="1298.7,216.7 1188.7,188.1 1222.5,299.6"/>
<polygon fill="#fff" fill-opacity="0.0270" points="1295.2,217.3 1190.0,189.4 1222.9,296.1"/>
<polygon fill="#fff" fill-opacity="0.0278" points="1291.9,217.8 1191.4,190.7 1223.2,292.8"/>
<polygon fill="#fff" fill-opacity="0.0286" points="1288.8,218.4 1192.7,192.0 1223.5,289.6"/>
<polygon fill="#fff" fill-opacity="0.0294" points="1285.7,218.9 1194.0,193.3 1223.8,286.6"/>
<polygon fill="#fff" fill-opacity="0.0303" points="1282.8,219.4 1195.2,194.5 1224.0,283.7"/>
<polygon fill="#fff" fill-opacity="0.0312" points="1280.1,219.8 1196.5,195.8 1224.3,280.9"/>
<polygon fill="#fff" fill-opacity="0.0323" points="1277.4,220.3 1197.7,197.0 1224.6,278.2"/>
<polygon fill="#fff" fill-opacity="0.0333" points="1274.9,220.7 1199.0,198.2 1224.8,275.6"/>
<polygon fill="#fff" fill-opacity="0.0345" points="1272.4,221.1 1200.2,199.4 1225.1,273.1"/>
<polygon fill="#fff" fill-opacity="0.0357" points="1270.1,221.5 1201.4,200.6 1225.3,270.7"/>
<polygon fill="#fff" fill-opacity="0.0370" points="1267.8,221.8 1202.6,201.8 1225.5,268.4"/>
<polygon fill="#fff" fill-opacity="0.0385" points="1265.6,222.2 1203.8,203.0 1225.7,266.1"/>
<polygon fill="#fff" fill-opacity="0.0400" points="1263.6,222.6 1204.9,204.1 1225.9,264.0"/>
<polygon fill="#fff" fill-opacity="0.0417" points="1261.5,222.9 1206.1,205.2 1226.1,261.9"/>
<polygon fill="#fff" fill-opacity="0.0435" points="1259.6,223.2 1207.2,206.4 1226.3,259.9"/>
<polygon fill="#fff" fill-opacity="0.0455" points="1257.7,223.5 1208.3,207.5 1226.5,258.0"/>
<polygon fill="#fff" fill-opacity="0.0476" points="1255.9,223.8 1209.4,208.6 1226.7,256.1"/>
<polygon fill="#fff" fill-opacity="0.0500" points="1254.2,224.1 1210.5,209.6 1226.9,254.3"/>
<polygon fill="#fff" fill-opacity="0.0526" points="1252.5,224.4 1211.6,210.7 1227.0,252.5"/>
<polygon fill="#fff" fill-opacity="0.0556" points="1250.9,224.7 1212.7,211.8 1227.2,250.9"/>
<polygon fill="#fff" fill-opacity="0.0588" points="1249.3,224.9 1213.7,212.8 1227.4,249.2"/>
<polygon fill="#fff" fill-opacity="0.0625" points="1247.8,225.2 1214.8,213.8 1227.5,247.6"/>
<polygon fill="#fff" fill-opacity="0.0667" points="1246.3,225.4 1215.8,214.8 1227.7,246.1"/>
<polygon fill="#fff" fill-opacity="0.0714" points="1244.9,225.7 1216.8,215.8 1227.8,244.6"/>
<polygon fill="#fff" fill-opacity="0.0769" points="1243.5,225.9 1217.8,216.8 1227.9,243.2"/>
<polygon fill="#fff" fill-opacity="0.0833" points="1242.2,226.1 1218.8,217.8 1228.1,241.8"/>
<polygon fill="#fff" fill-opacity="0.0909" points="1240.9,226.3 1219.8,218.8 1228.2,240.4"/>
<polygon fill="#fff" fill-opacity="0.1000" points="1239.6,226.5 1220.8,219.7 1228.3,239.1"/>
<polygon fill="#fff" fill-opacity="0.1111" points="1238.4,226.7 1221.7,220.7 1228.4,237.8"/>
<polygon fill="#fff" fill-opacity="0.1250" points="1237.2,226.9 1222.6,221.6 1228.6,236.5"/>
<polygon fill="#fff" fill-opacity="0.1429" points="1236.1,227.1 1223.6,222.5 1228.7,235.3"/>
<polygon fill="#fff" fill-opacity="0.1667" points="1235.0,227.3 1224.5,223.4 1228.8,234.2"/>
<polygon fill="#fff" fill-opacity="0.2000" points="1233.9,227.5 1225.4,224.3 1228.9,233.0"/>
<polygon fill="#fff" fill-opacity="0.2500" points="1232.8,227.7 1226.3,225.2 1229.0,231.9"/>
<polygon fill="#fff" fill-opacity="0.3333" points="1231.8,227.8 1227.2,226.1 1229.1,230.8"/>
<polygon fill="#fff" fill-opacity="0.5000" points="1230.8,228.0 1228.1,227.0 1229.2,229.8"/>
<polygon fill="#fff" fill-opacity="1.0000" points="1229.8,228.2 1228.9,227.8 1229.3,228.7"/>
<ellipse cx="1235.5" cy="230" rx="24" ry="22" fill="url(#gGlow)"/>
<path d="M1291.8 595.4 L1291.7 595.4 L1291.6 595.4 L1291.5 595.4 L1291.4 595.4 L1291.3 595.4 L1291.1 595.4 L1290.9 595.4 L1290.8 595.4 L1290.7 595.4 L1290.6 595.4 L1290.4 595.4 L1290.2 595.4 L1289.9 595.4 L1289.6 595.4 L1289.3 595.4 L1288.9 595.4 L1288.6 595.4 L1288.1 595.4 L1287.6 595.4 L1286.8 595.4 L1285.8 595.4 L1284.7 595.4 L1283.4 595.4 L1282.0 594.6 L1280.3 593.3 L1278.3 591.7 L1276.1 590.0 L1273.7 588.0 L1271.1 585.7 L1268.2 583.2 L1265.0 580.6 L1261.5 577.6 L1257.5 574.4 L1253.1 570.7 L1248.3 566.8 L1243.2 562.5 L1237.6 557.9 L1231.6 552.7 L1225.0 546.9 L1218.0 540.4 L1210.6 533.3 L1202.5 524.9 L1193.4 514.8 L1183.0 502.5 L1171.6 488.1 L1159.5 472.0 L1146.8 454.0 L1133.5 434.2 L1119.9 412.7 L1106.3 390.0 L1092.7 366.7 L1079.7 343.0 L1067.8 319.4 L1057.2 296.5 L1048.0 274.6 L1040.0 254.2 L1033.4 235.6 L1028.2 219.0 L1024.4 204.4 L1021.7 191.6 L1020.1 180.6 L1019.5 171.2 L1019.8 163.0 L1020.9 156.0 L1022.9 150.0 L1025.7 145.0 L1029.1 140.9 L1033.2 137.8 L1037.7 135.4 L1042.6 133.8 L1047.9 132.7 L1053.5 132.0 L1059.3 131.6 L1065.3 131.3 L1071.4 131.3 L1077.4 131.3 L1083.5 131.4 L1089.7 131.5 L1096.0 131.8 L1102.4 132.2 L1109.1 132.6 L1116.0 133.1 L1123.1 133.7 L1130.5 134.4 L1138.1 135.1 L1146.1 135.9 L1154.3 136.7 L1162.9 137.6 L1171.9 138.6 L1181.2 139.6 L1190.9 140.7 L1201.0 141.8 L1211.5 143.0 L1222.5 144.2 L1233.9 145.5 L1245.8 146.8 L1258.1 148.3 L1270.8 149.7 L1284.0 151.2 L1297.6 152.8 L1311.6 154.4 L1326.1 156.1 L1340.8 157.8 L1355.9 159.5 L1371.3 161.3 L1386.9 163.0 L1402.6 164.9 L1418.0 166.6 L1433.1 168.4 L1448.1 170.1 L1463.0 171.8 L1477.7 173.5 L1491.8 175.1 L1505.2 176.6 L1518.0 178.1 L1530.3 179.5 L1541.9 180.8 L1552.8 182.1 L1563.0 183.3 L1572.5 184.4 L1581.3 185.4 L1589.6 186.3 L1597.2 187.2 L1604.4 188.0 L1611.1 188.8 L1617.5 189.5 L1623.6 190.2 L1629.2 190.9 L1634.5 191.5 L1639.4 192.0 L1643.9 192.6 L1648.1 193.0 L1651.8 193.5 L1655.1 193.8 L1658.0 194.2 L1660.7 194.5 L1663.2 194.8 L1665.3 195.0 L1667.3 195.2 L1669.0 195.4 L1670.4 195.6 L1671.6 195.7 L1672.7 195.9 L1673.7 196.0 L1674.7 196.1 L1675.6 196.2 L1676.4 196.3 L1677.2 196.4 L1678.0 196.5 L1678.8 196.6 L1679.5 196.6 L1680.2 196.7 L1680.8 196.8 L1681.2 196.8 L1681.5 196.9 L1681.8 196.9 L1682.0 196.9 L1682.2 197.0 L1682.4 197.0 L1682.4 197.0Z M1498.4 183.6 L1151.2 151.1 L1205.0 482.5Z" fill="#000" fill-opacity="0.37" fill-rule="evenodd"/>
</g>
<rect x="1018" y="120.2" width="639.5" height="490.8" fill="none" stroke="#9c9c9c" stroke-width="1.5"/>
<rect x="1143.4" y="142.9" width="13.4" height="13.4" fill="#fff" fill-opacity="0.03" stroke="#fff" stroke-opacity="0.9" stroke-width="1.4"/>
<rect x="1167.9" y="166.4" width="13.4" height="13.4" fill="#fff" fill-opacity="0.03" stroke="#fff" stroke-opacity="0.9" stroke-width="1.4"/>
<rect x="1207.5" y="158.6" width="13.4" height="13.4" fill="#fff" fill-opacity="0.03" stroke="#fff" stroke-opacity="0.9" stroke-width="1.4"/>
<rect x="1227.5" y="150.6" width="13.4" height="13.4" fill="#fff" fill-opacity="0.03" stroke="#fff" stroke-opacity="0.9" stroke-width="1.4"/>
<rect x="1254.6" y="154.5" width="13.4" height="13.4" fill="#fff" fill-opacity="0.03" stroke="#fff" stroke-opacity="0.9" stroke-width="1.4"/>
<rect x="1286.9" y="161.6" width="13.4" height="13.4" fill="#fff" fill-opacity="0.03" stroke="#fff" stroke-opacity="0.9" stroke-width="1.4"/>
<rect x="1329.8" y="165.5" width="13.4" height="13.4" fill="#fff" fill-opacity="0.03" stroke="#fff" stroke-opacity="0.9" stroke-width="1.4"/>
<rect x="1204.8" y="180.7" width="13.4" height="13.4" fill="#fff" fill-opacity="0.03" stroke="#fff" stroke-opacity="0.9" stroke-width="1.4"/>
<rect x="1258.8" y="200.7" width="13.4" height="13.4" fill="#fff" fill-opacity="0.03" stroke="#fff" stroke-opacity="0.9" stroke-width="1.4"/>
<rect x="1269.9" y="194.4" width="13.4" height="13.4" fill="#fff" fill-opacity="0.03" stroke="#fff" stroke-opacity="0.9" stroke-width="1.4"/>
<rect x="1348.9" y="207.5" width="13.4" height="13.4" fill="#fff" fill-opacity="0.03" stroke="#fff" stroke-opacity="0.9" stroke-width="1.4"/>
<rect x="1174.7" y="211.4" width="13.4" height="13.4" fill="#fff" fill-opacity="0.03" stroke="#fff" stroke-opacity="0.9" stroke-width="1.4"/>
<rect x="1158.9" y="230.5" width="13.4" height="13.4" fill="#fff" fill-opacity="0.03" stroke="#fff" stroke-opacity="0.9" stroke-width="1.4"/>
<rect x="1163.7" y="262.7" width="13.4" height="13.4" fill="#fff" fill-opacity="0.03" stroke="#fff" stroke-opacity="0.9" stroke-width="1.4"/>
<rect x="1197.7" y="259.4" width="13.4" height="13.4" fill="#fff" fill-opacity="0.03" stroke="#fff" stroke-opacity="0.9" stroke-width="1.4"/>
<rect x="1218.3" y="264.5" width="13.4" height="13.4" fill="#fff" fill-opacity="0.03" stroke="#fff" stroke-opacity="0.9" stroke-width="1.4"/>
<rect x="1316.1" y="253.5" width="13.4" height="13.4" fill="#fff" fill-opacity="0.03" stroke="#fff" stroke-opacity="0.9" stroke-width="1.4"/>
<rect x="1253.8" y="282.7" width="13.4" height="13.4" fill="#fff" fill-opacity="0.03" stroke="#fff" stroke-opacity="0.9" stroke-width="1.4"/>
<rect x="1200.7" y="312.5" width="13.4" height="13.4" fill="#fff" fill-opacity="0.03" stroke="#fff" stroke-opacity="0.9" stroke-width="1.4"/>
<rect x="1200.7" y="362.6" width="13.4" height="13.4" fill="#fff" fill-opacity="0.03" stroke="#fff" stroke-opacity="0.9" stroke-width="1.4"/>
<rect x="1335.5" y="332.8" width="13.4" height="13.4" fill="#fff" fill-opacity="0.03" stroke="#fff" stroke-opacity="0.9" stroke-width="1.4"/>
<rect x="1491.0" y="175.2" width="13.4" height="13.4" fill="#fff" fill-opacity="0.03" stroke="#fff" stroke-opacity="0.9" stroke-width="1.4"/>
<rect x="1409.7" y="195.9" width="13.4" height="13.4" fill="#fff" fill-opacity="0.03" stroke="#fff" stroke-opacity="0.9" stroke-width="1.4"/>
<rect x="1197.6" y="474.6" width="13.4" height="13.4" fill="#fff" fill-opacity="0.03" stroke="#fff" stroke-opacity="0.9" stroke-width="1.4"/>
<rect x="1221.3" y="220.3" width="12.6" height="12.6" fill="none" stroke="#000" stroke-width="2.2"/>
<circle cx="1143.5" cy="148.2" r="4.1" fill="#00f000" stroke="#000" stroke-width="1.3"/>
<circle cx="1168.0" cy="169.8" r="4.1" fill="#4e8450" stroke="#000" stroke-width="1.3"/>
<circle cx="1211.5" cy="163.0" r="4.1" fill="#98a83c" stroke="#000" stroke-width="1.3"/>
<circle cx="1233.0" cy="156.1" r="4.1" fill="#f4f400" stroke="#000" stroke-width="1.3"/>
<circle cx="1262.8" cy="159.7" r="4.1" fill="#d8b428" stroke="#000" stroke-width="1.3"/>
<circle cx="1294.4" cy="164.7" r="4.1" fill="#d49a38" stroke="#000" stroke-width="1.3"/>
<circle cx="1336.5" cy="168.3" r="4.1" fill="#cc7c30" stroke="#000" stroke-width="1.3"/>
<circle cx="1208.6" cy="182.0" r="4.1" fill="#566438" stroke="#000" stroke-width="1.3"/>
<circle cx="1266.1" cy="202.3" r="4.1" fill="#b88c7c" stroke="#000" stroke-width="1.3"/>
<circle cx="1281.0" cy="194.0" r="4.1" fill="#6c4c3c" stroke="#000" stroke-width="1.3"/>
<circle cx="1361.0" cy="206.5" r="4.1" fill="#b4505c" stroke="#000" stroke-width="1.3"/>
<circle cx="1178.4" cy="216.0" r="4.1" fill="#78a494" stroke="#000" stroke-width="1.3"/>
<circle cx="1159.3" cy="228.3" r="4.1" fill="#00f0f0" stroke="#000" stroke-width="1.3"/>
<circle cx="1162.3" cy="251.2" r="4.1" fill="#0c7c90" stroke="#000" stroke-width="1.3"/>
<circle cx="1200.5" cy="257.8" r="4.1" fill="#5874a0" stroke="#000" stroke-width="1.3"/>
<circle cx="1226.5" cy="267.6" r="4.1" fill="#8480b0" stroke="#000" stroke-width="1.3"/>
<circle cx="1331.1" cy="253.9" r="4.1" fill="#ac5090" stroke="#000" stroke-width="1.3"/>
<circle cx="1270.0" cy="286.7" r="4.1" fill="#5c3868" stroke="#000" stroke-width="1.3"/>
<circle cx="1204.4" cy="316.8" r="4.1" fill="#485c9c" stroke="#000" stroke-width="1.3"/>
<circle cx="1208.6" cy="376.2" r="4.1" fill="#303c90" stroke="#000" stroke-width="1.3"/>
<circle cx="1351.4" cy="328.8" r="4.1" fill="#f000f0" stroke="#000" stroke-width="1.3"/>
<circle cx="1487.9" cy="176.2" r="4.1" fill="#f00000" stroke="#000" stroke-width="1.3"/>
<circle cx="1424.0" cy="193.0" r="4.1" fill="#a83038" stroke="#000" stroke-width="1.3"/>
<circle cx="1211.4" cy="488.4" r="4.1" fill="#0000e0" stroke="#000" stroke-width="1.3"/>
<circle cx="1229.1" cy="222.9" r="3.9" fill="#a4a4a4" stroke="#000" stroke-width="1.1"/>
<circle cx="1249.4" cy="251.2" r="4.4" fill="#000"/>
<rect x="1452.4" y="438.6" width="198.8" height="131" fill="url(#gIns)" stroke="#868686" stroke-width="1.4"/>
<g clip-path="url(#insclip)"><path d="M1440 446.45 L1453.3 453.2 L1651.2 553.6 L1660 558 V430 H1440Z" fill="#000" fill-opacity="0.40"/></g>
<rect x="1544.6" y="496.4" width="14" height="14" fill="none" stroke="#fff" stroke-width="1.6"/>
<circle cx="1554.1" cy="487.5" r="3.9" fill="#f4f400" stroke="#000" stroke-width="1.1"/>
<rect x="1402.40" y="579.70" width="252.00" height="28.40" fill="#353535"/>
<text x="1402.42" y="600.60" font-size="19.04" textLength="212.34" lengthAdjust="spacingAndGlyphs" fill="#f4f4f4">RGB Triplet: 255, 255, 0</text>
<rect x="1662.5" y="0" width="5.5" height="1006" fill="url(#gEdgeR)"/>
</svg>
</body></html>
